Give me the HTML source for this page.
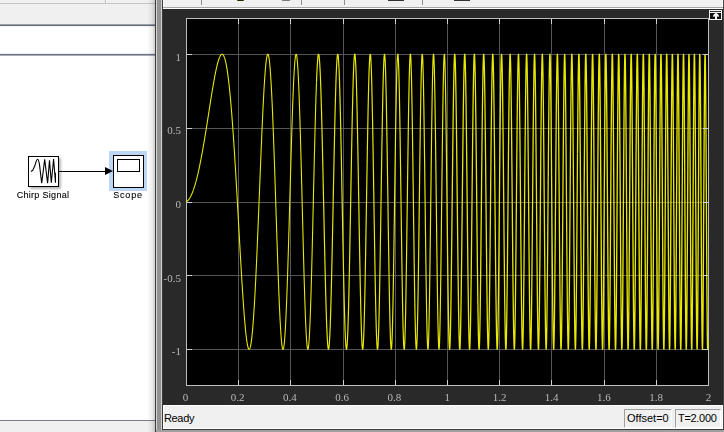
<!DOCTYPE html>
<html><head><meta charset="utf-8">
<style>
html,body{margin:0;padding:0;}
body{width:724px;height:432px;overflow:hidden;position:relative;background:#fff;font-family:"Liberation Sans",sans-serif;}
.a{position:absolute;}
.xl{position:absolute;top:389.5px;transform:translateZ(0);width:40px;text-align:center;font-family:"Liberation Serif",serif;font-size:11px;line-height:14px;color:#b8b8b8;}
.yl{position:absolute;left:140px;transform:translateZ(0);width:41px;text-align:right;font-family:"Liberation Serif",serif;font-size:11px;line-height:14px;color:#b8b8b8;}
svg .g{stroke:#555;stroke-width:1;}
svg .t{stroke:#d0d0d0;stroke-width:1;}
.st{position:absolute;font-size:11px;line-height:13px;color:#000;}
</style></head><body>
<!-- left simulink window -->
<div class="a" style="left:0;top:0;width:155px;height:3px;background:#f0f0f0"></div>
<div class="a" style="left:105px;top:0;width:1px;height:3px;background:#b8b8b8"></div>
<div class="a" style="left:106px;top:0;width:1px;height:3px;background:#fff"></div>
<div class="a" style="left:0;top:3px;width:155px;height:1px;background:#c4c4c4"></div>
<div class="a" style="left:0;top:4px;width:155px;height:20px;background:#f0f0f0"></div>
<div class="a" style="left:0;top:24px;width:155px;height:1px;background:#9aa0a8"></div>
<div class="a" style="left:0;top:25px;width:155px;height:1px;background:#6a707c"></div>
<div class="a" style="left:0;top:26px;width:155px;height:1px;background:#eef0f2"></div>
<div class="a" style="left:0;top:53px;width:155px;height:1px;background:#eceef0"></div>
<div class="a" style="left:0;top:54px;width:155px;height:1px;background:#6e7482"></div>
<div class="a" style="left:0;top:55px;width:155px;height:1px;background:#a8acb4"></div>
<div class="a" style="left:0;top:420px;width:155px;height:1px;background:#7a808a"></div>
<div class="a" style="left:0;top:421px;width:155px;height:11px;background:#f0f0f0"></div>
<div class="a" style="left:147px;top:0;width:8px;height:432px;background:linear-gradient(to right,rgba(0,0,0,0) 0%,rgba(0,0,0,0.07) 62%,rgba(0,0,0,0.19) 100%)"></div>

<!-- blocks -->
<div class="a" style="left:109px;top:151px;width:38px;height:40px;background:#bcd6f6"></div>
<div class="a" style="left:30px;top:158px;width:31px;height:31px;background:rgba(0,0,0,0.28);filter:blur(1.2px)"></div>
<div class="a" style="left:28px;top:156px;width:29px;height:29px;border:1px solid #000;background:#fff"></div>
<div class="a" style="left:113px;top:155px;width:29px;height:31px;border:1px solid #000;background:#fff"></div>
<div class="a" style="left:117px;top:159px;width:21px;height:11px;border:1px solid #000;background:#fff"></div>
<svg class="a" style="left:0;top:0" width="160" height="210">
<path d="M31,171.5 L32.8,170.2 L34.7,166.1 L36.1,161.7 C36.6,160.2 37,159.2 37.5,159.2 C38.2,159.2 38.8,160.5 39.5,164.6 L41.7,183.2 L44.7,159.4 L47.6,183.3 L49.5,160.2 L51.3,182.8 L53.6,159.1 L55.5,182.8 L55.4,172.8" fill="none" stroke="#000" stroke-width="1.1"/>
<line x1="59" y1="171.5" x2="106" y2="171.5" stroke="#000" stroke-width="1"/>
<path d="M105,167 L113,171 L105,175 Z" fill="#000"/>
</svg>
<div class="a" style="left:0px;top:190px;width:86px;text-align:center;font-size:9px;line-height:11px;letter-spacing:0.3px;color:#000;transform:translateZ(0);-webkit-text-stroke:0.1px #000">Chirp Signal</div>
<div class="a" style="left:97px;top:190px;width:62px;text-align:center;font-size:9px;line-height:11px;letter-spacing:0.8px;color:#000;transform:translateZ(0);-webkit-text-stroke:0.1px #000">Scope</div>

<!-- separator -->
<div class="a" style="left:155px;top:0;width:1px;height:432px;background:#3c3c3c"></div>
<div class="a" style="left:156px;top:0;width:1px;height:432px;background:#d4d4d4"></div>
<div class="a" style="left:157px;top:0;width:4px;height:432px;background:#939393"></div>
<div class="a" style="left:161px;top:0;width:1px;height:432px;background:#d0d0d0"></div>

<!-- scope window -->
<div class="a" style="left:162px;top:0;width:561px;height:430px;background:#292929"></div>
<div class="a" style="left:162px;top:0;width:1px;height:430px;background:#3a3a3a"></div>
<div class="a" style="left:723px;top:0;width:1px;height:432px;background:#454545"></div>
<div class="a" style="left:162px;top:429px;width:562px;height:1px;background:#3c3c3c"></div>
<div class="a" style="left:156px;top:430px;width:568px;height:2px;background:#a0a0a0"></div>
<!-- toolbar -->
<div class="a" style="left:163px;top:0;width:560px;height:7px;background:#f0f0f0"></div>
<div class="a" style="left:163px;top:0;width:1px;height:8px;background:#fff"></div>
<div class="a" style="left:722px;top:0;width:1px;height:8px;background:#fff"></div>
<div class="a" style="left:163px;top:7px;width:560px;height:1px;background:#a4a4a4"></div>
<div class="a" style="left:163px;top:8px;width:560px;height:1px;background:#fcfcfc"></div>
<div class="a" style="left:201px;top:0;width:1px;height:5px;background:#909090"></div>
<div class="a" style="left:301px;top:0;width:1px;height:5px;background:#909090"></div>
<div class="a" style="left:344px;top:0;width:1px;height:5px;background:#909090"></div>
<div class="a" style="left:422px;top:0;width:1px;height:5px;background:#909090"></div>
<div class="a" style="left:237px;top:0;width:7px;height:1px;background:#1a2a08;border-radius:0 0 3px 3px"></div>
<div class="a" style="left:282px;top:0;width:8px;height:1px;background:#7a7a7a"></div>
<div class="a" style="left:388px;top:0;width:16px;height:1px;background:#303030"></div>
<div class="a" style="left:454px;top:0;width:16px;height:1px;background:#303030"></div>

<!-- undock button -->
<div class="a" style="left:709px;top:10px;width:11px;height:8px;border:1px solid #f4f4f4;background:#111"></div>
<div class="a" style="left:711px;top:11px;width:9px;height:1px;background:#333"></div>
<div class="a" style="left:710px;top:12px;width:11px;height:1px;background:#f4f4f4"></div>
<svg class="a" style="left:700px;top:0" width="24" height="24">
<path d="M16,12.8 C17.6,13.4 19,15 19.2,16.8 L17,16.4 L17,20 L15,20 L15,16.4 L12.8,16.8 C13,15 14.4,13.4 16,12.8 Z" fill="#f4f4f4"/>
</svg>

<!-- plot -->
<svg class="a" style="left:0;top:0" width="724" height="432">
<rect x="186.5" y="18.5" width="522" height="367" fill="#000" stroke="#bdbdbd" stroke-width="1"/>
<line x1="238.5" y1="19" x2="238.5" y2="385" class="g"/>
<line x1="290.5" y1="19" x2="290.5" y2="385" class="g"/>
<line x1="343.5" y1="19" x2="343.5" y2="385" class="g"/>
<line x1="395.5" y1="19" x2="395.5" y2="385" class="g"/>
<line x1="447.5" y1="19" x2="447.5" y2="385" class="g"/>
<line x1="499.5" y1="19" x2="499.5" y2="385" class="g"/>
<line x1="551.5" y1="19" x2="551.5" y2="385" class="g"/>
<line x1="604.5" y1="19" x2="604.5" y2="385" class="g"/>
<line x1="656.5" y1="19" x2="656.5" y2="385" class="g"/>
<line x1="187" y1="54.5" x2="708" y2="54.5" class="g"/>
<line x1="187" y1="128.5" x2="708" y2="128.5" class="g"/>
<line x1="187" y1="202.5" x2="708" y2="202.5" class="g"/>
<line x1="187" y1="275.5" x2="708" y2="275.5" class="g"/>
<line x1="187" y1="349.5" x2="708" y2="349.5" class="g"/>
<path d="M186.00,201.75 186.09,201.72 186.17,201.68 186.26,201.65 186.35,201.61 186.44,201.56 186.52,201.52 186.61,201.47 186.70,201.42 186.78,201.37 186.87,201.31 186.96,201.26 187.04,201.20 187.13,201.13 187.22,201.07 187.31,201.00 187.39,200.93 187.48,200.86 187.57,200.78 187.65,200.70 187.74,200.62 187.83,200.54 187.91,200.45 188.00,200.36 188.09,200.27 188.18,200.18 188.26,200.08 188.35,199.99 188.44,199.88 188.52,199.78 188.61,199.67 188.70,199.57 188.78,199.45 188.87,199.34 188.96,199.22 189.04,199.10 189.13,198.98 189.22,198.86 189.31,198.73 189.39,198.60 189.48,198.47 189.57,198.34 189.65,198.20 189.74,198.06 189.83,197.92 189.91,197.77 190.00,197.63 190.09,197.48 190.18,197.33 190.26,197.17 190.35,197.01 190.44,196.85 190.52,196.69 190.61,196.53 190.70,196.36 190.78,196.19 190.87,196.02 190.96,195.84 191.05,195.66 191.13,195.48 191.22,195.30 191.31,195.12 191.39,194.93 191.48,194.74 191.57,194.55 191.66,194.35 191.74,194.15 191.83,193.95 191.92,193.75 192.00,193.54 192.09,193.33 192.18,193.12 192.26,192.91 192.35,192.70 192.44,192.48 192.53,192.26 192.61,192.03 192.70,191.81 192.79,191.58 192.87,191.35 192.96,191.11 193.05,190.88 193.13,190.64 193.22,190.40 193.31,190.16 193.40,189.91 193.48,189.66 193.57,189.41 193.66,189.16 193.74,188.90 193.83,188.64 193.92,188.38 194.00,188.12 194.09,187.85 194.18,187.58 194.26,187.31 194.35,187.04 194.44,186.76 194.53,186.49 194.61,186.20 194.70,185.92 194.79,185.64 194.87,185.35 194.96,185.06 195.05,184.76 195.13,184.47 195.22,184.17 195.31,183.87 195.40,183.56 195.48,183.26 195.57,182.95 195.66,182.64 195.74,182.33 195.83,182.01 195.92,181.69 196.00,181.37 196.09,181.05 196.18,180.73 196.27,180.40 196.35,180.07 196.44,179.74 196.53,179.40 196.61,179.06 196.70,178.72 196.79,178.38 196.88,178.04 196.96,177.69 197.05,177.34 197.14,176.99 197.22,176.64 197.31,176.28 197.40,175.92 197.48,175.56 197.57,175.20 197.66,174.83 197.75,174.46 197.83,174.09 197.92,173.72 198.01,173.35 198.09,172.97 198.18,172.59 198.27,172.21 198.35,171.82 198.44,171.44 198.53,171.05 198.62,170.66 198.70,170.26 198.79,169.87 198.88,169.47 198.96,169.07 199.05,168.67 199.14,168.26 199.22,167.86 199.31,167.45 199.40,167.04 199.49,166.62 199.57,166.21 199.66,165.79 199.75,165.37 199.83,164.95 199.92,164.52 200.01,164.10 200.09,163.67 200.18,163.24 200.27,162.80 200.35,162.37 200.44,161.93 200.53,161.49 200.62,161.05 200.70,160.61 200.79,160.16 200.88,159.72 200.96,159.27 201.05,158.82 201.14,158.36 201.22,157.91 201.31,157.45 201.40,156.99 201.49,156.53 201.57,156.07 201.66,155.60 201.75,155.14 201.83,154.67 201.92,154.20 202.01,153.72 202.09,153.25 202.18,152.77 202.27,152.29 202.36,151.81 202.44,151.33 202.53,150.85 202.62,150.36 202.70,149.88 202.79,149.39 202.88,148.90 202.97,148.40 203.05,147.91 203.14,147.41 203.23,146.92 203.31,146.42 203.40,145.92 203.49,145.42 203.57,144.91 203.66,144.41 203.75,143.90 203.84,143.39 203.92,142.88 204.01,142.37 204.10,141.86 204.18,141.34 204.27,140.83 204.36,140.31 204.44,139.79 204.53,139.27 204.62,138.75 204.71,138.23 204.79,137.70 204.88,137.18 204.97,136.65 205.05,136.12 205.14,135.59 205.23,135.06 205.31,134.53 205.40,134.00 205.49,133.46 205.57,132.93 205.66,132.39 205.75,131.86 205.84,131.32 205.92,130.78 206.01,130.24 206.10,129.70 206.18,129.15 206.27,128.61 206.36,128.07 206.44,127.52 206.53,126.98 206.62,126.43 206.71,125.88 206.79,125.33 206.88,124.79 206.97,124.24 207.05,123.69 207.14,123.13 207.23,122.58 207.31,122.03 207.40,121.48 207.49,120.92 207.58,120.37 207.66,119.82 207.75,119.26 207.84,118.71 207.92,118.15 208.01,117.60 208.10,117.04 208.19,116.48 208.27,115.93 208.36,115.37 208.45,114.81 208.53,114.25 208.62,113.70 208.71,113.14 208.79,112.58 208.88,112.02 208.97,111.47 209.06,110.91 209.14,110.35 209.23,109.79 209.32,109.24 209.40,108.68 209.49,108.12 209.58,107.57 209.66,107.01 209.75,106.45 209.84,105.90 209.93,105.34 210.01,104.79 210.10,104.23 210.19,103.68 210.27,103.13 210.36,102.57 210.45,102.02 210.53,101.47 210.62,100.92 210.71,100.37 210.80,99.82 210.88,99.27 210.97,98.73 211.06,98.18 211.14,97.64 211.23,97.09 211.32,96.55 211.40,96.01 211.49,95.47 211.58,94.93 211.66,94.39 211.75,93.85 211.84,93.31 211.93,92.78 212.01,92.25 212.10,91.72 212.19,91.19 212.27,90.66 212.36,90.13 212.45,89.60 212.53,89.08 212.62,88.56 212.71,88.04 212.80,87.52 212.88,87.00 212.97,86.49 213.06,85.98 213.14,85.47 213.23,84.96 213.32,84.45 213.41,83.95 213.49,83.45 213.58,82.95 213.67,82.45 213.75,81.96 213.84,81.47 213.93,80.98 214.01,80.49 214.10,80.00 214.19,79.52 214.28,79.04 214.36,78.57 214.45,78.09 214.54,77.62 214.62,77.15 214.71,76.69 214.80,76.23 214.88,75.77 214.97,75.31 215.06,74.86 215.15,74.41 215.23,73.97 215.32,73.52 215.41,73.09 215.49,72.65 215.58,72.22 215.67,71.79 215.75,71.37 215.84,70.94 215.93,70.53 216.01,70.11 216.10,69.70 216.19,69.30 216.28,68.90 216.36,68.50 216.45,68.11 216.54,67.72 216.62,67.33 216.71,66.95 216.80,66.57 216.88,66.20 216.97,65.84 217.06,65.47 217.15,65.11 217.23,64.76 217.32,64.41 217.41,64.07 217.49,63.73 217.58,63.39 217.67,63.06 217.75,62.74 217.84,62.42 217.93,62.11 218.02,61.80 218.10,61.49 218.19,61.19 218.28,60.90 218.36,60.61 218.45,60.33 218.54,60.05 218.62,59.78 218.71,59.52 218.80,59.26 218.89,59.00 218.97,58.76 219.06,58.51 219.15,58.28 219.23,58.05 219.32,57.82 219.41,57.61 219.50,57.39 219.58,57.19 219.67,56.99 219.76,56.80 219.84,56.61 219.93,56.43 220.02,56.26 220.10,56.09 220.19,55.94 220.28,55.78 220.37,55.64 220.45,55.50 220.54,55.37 220.63,55.24 220.71,55.12 220.80,55.01 220.89,54.91 220.97,54.81 221.06,54.73 221.15,54.64 221.24,54.57 221.32,54.50 221.41,54.44 221.50,54.39 221.58,54.35 221.67,54.31 221.76,54.29 221.84,54.27 221.93,54.25 222.02,54.25 222.11,54.25 222.19,54.27 222.28,54.29 222.37,54.31 222.45,54.35 222.54,54.40 222.63,54.45 222.71,54.51 222.80,54.58 222.89,54.66 222.97,54.75 223.06,54.84 223.15,54.95 223.24,55.06 223.32,55.18 223.41,55.31 223.50,55.45 223.58,55.60 223.67,55.76 223.76,55.92 223.84,56.10 223.93,56.29 224.02,56.48 224.11,56.68 224.19,56.90 224.28,57.12 224.37,57.35 224.45,57.59 224.54,57.84 224.63,58.10 224.72,58.37 224.80,58.65 224.89,58.94 224.98,59.23 225.06,59.54 225.15,59.86 225.24,60.19 225.32,60.52 225.41,60.87 225.50,61.23 225.59,61.59 225.67,61.97 225.76,62.36 225.85,62.75 225.93,63.16 226.02,63.58 226.11,64.00 226.19,64.44 226.28,64.89 226.37,65.35 226.45,65.81 226.54,66.29 226.63,66.78 226.72,67.28 226.80,67.79 226.89,68.31 226.98,68.84 227.06,69.38 227.15,69.93 227.24,70.49 227.32,71.06 227.41,71.64 227.50,72.24 227.59,72.84 227.67,73.45 227.76,74.08 227.85,74.71 227.93,75.36 228.02,76.01 228.11,76.68 228.19,77.36 228.28,78.04 228.37,78.74 228.46,79.45 228.54,80.17 228.63,80.90 228.72,81.64 228.80,82.39 228.89,83.15 228.98,83.93 229.06,84.71 229.15,85.50 229.24,86.31 229.33,87.12 229.41,87.95 229.50,88.78 229.59,89.63 229.67,90.48 229.76,91.35 229.85,92.23 229.94,93.12 230.02,94.02 230.11,94.92 230.20,95.84 230.28,96.77 230.37,97.71 230.46,98.66 230.54,99.62 230.63,100.60 230.72,101.58 230.81,102.57 230.89,103.57 230.98,104.58 231.07,105.60 231.15,106.63 231.24,107.68 231.33,108.73 231.41,109.79 231.50,110.86 231.59,111.94 231.68,113.03 231.76,114.13 231.85,115.24 231.94,116.36 232.02,117.49 232.11,118.63 232.20,119.78 232.28,120.94 232.37,122.11 232.46,123.28 232.55,124.47 232.63,125.66 232.72,126.87 232.81,128.08 232.89,129.30 232.98,130.53 233.07,131.77 233.15,133.02 233.24,134.28 233.33,135.54 233.41,136.81 233.50,138.10 233.59,139.39 233.68,140.68 233.76,141.99 233.85,143.30 233.94,144.63 234.02,145.96 234.11,147.29 234.20,148.64 234.28,149.99 234.37,151.35 234.46,152.72 234.55,154.09 234.63,155.47 234.72,156.86 234.81,158.26 234.89,159.66 234.98,161.07 235.07,162.48 235.16,163.90 235.24,165.33 235.33,166.77 235.42,168.21 235.50,169.65 235.59,171.10 235.68,172.56 235.76,174.02 235.85,175.49 235.94,176.96 236.03,178.44 236.11,179.92 236.20,181.41 236.29,182.91 236.37,184.40 236.46,185.90 236.55,187.41 236.63,188.92 236.72,190.43 236.81,191.95 236.90,193.47 236.98,194.99 237.07,196.52 237.16,198.05 237.24,199.59 237.33,201.12 237.42,202.66 237.50,204.20 237.59,205.75 237.68,207.29 237.76,208.84 237.85,210.39 237.94,211.94 238.03,213.49 238.11,215.05 238.20,216.60 238.29,218.16 238.37,219.72 238.46,221.27 238.55,222.83 238.63,224.39 238.72,225.94 238.81,227.50 238.90,229.06 238.98,230.61 239.07,232.17 239.16,233.72 239.24,235.28 239.33,236.83 239.42,238.38 239.50,239.93 239.59,241.47 239.68,243.02 239.77,244.56 239.85,246.10 239.94,247.63 240.03,249.16 240.11,250.69 240.20,252.22 240.29,253.74 240.38,255.26 240.46,256.77 240.55,258.28 240.64,259.79 240.72,261.29 240.81,262.79 240.90,264.28 240.98,265.76 241.07,267.24 241.16,268.71 241.25,270.18 241.33,271.64 241.42,273.10 241.51,274.54 241.59,275.98 241.68,277.42 241.77,278.84 241.85,280.26 241.94,281.67 242.03,283.07 242.12,284.47 242.20,285.85 242.29,287.23 242.38,288.60 242.46,289.95 242.55,291.30 242.64,292.64 242.72,293.97 242.81,295.29 242.90,296.60 242.99,297.89 243.07,299.18 243.16,300.46 243.25,301.72 243.33,302.97 243.42,304.21 243.51,305.44 243.59,306.66 243.68,307.86 243.77,309.05 243.86,310.23 243.94,311.40 244.03,312.55 244.12,313.69 244.20,314.81 244.29,315.92 244.38,317.02 244.46,318.10 244.55,319.17 244.64,320.22 244.72,321.25 244.81,322.27 244.90,323.28 244.99,324.27 245.07,325.24 245.16,326.20 245.25,327.14 245.33,328.06 245.42,328.97 245.51,329.86 245.59,330.73 245.68,331.59 245.77,332.42 245.86,333.24 245.94,334.04 246.03,334.83 246.12,335.59 246.20,336.34 246.29,337.06 246.38,337.77 246.47,338.46 246.55,339.13 246.64,339.77 246.73,340.40 246.81,341.01 246.90,341.60 246.99,342.17 247.07,342.72 247.16,343.24 247.25,343.75 247.33,344.23 247.42,344.69 247.51,345.14 247.60,345.56 247.68,345.95 247.77,346.33 247.86,346.68 247.94,347.02 248.03,347.33 248.12,347.61 248.21,347.88 248.29,348.12 248.38,348.34 248.47,348.53 248.55,348.70 248.64,348.85 248.73,348.98 248.81,349.08 248.90,349.16 248.99,349.21 249.07,349.24 249.16,349.25 249.25,349.23 249.34,349.19 249.42,349.12 249.51,349.03 249.60,348.92 249.68,348.78 249.77,348.61 249.86,348.43 249.94,348.21 250.03,347.97 250.12,347.71 250.21,347.42 250.29,347.11 250.38,346.77 250.47,346.41 250.55,346.02 250.64,345.61 250.73,345.17 250.81,344.70 250.90,344.21 250.99,343.70 251.08,343.16 251.16,342.60 251.25,342.01 251.34,341.39 251.42,340.75 251.51,340.09 251.60,339.40 251.69,338.68 251.77,337.94 251.86,337.17 251.95,336.38 252.03,335.57 252.12,334.72 252.21,333.86 252.29,332.97 252.38,332.05 252.47,331.11 252.56,330.15 252.64,329.16 252.73,328.15 252.82,327.11 252.90,326.05 252.99,324.96 253.08,323.85 253.16,322.72 253.25,321.56 253.34,320.38 253.43,319.17 253.51,317.94 253.60,316.69 253.69,315.42 253.77,314.12 253.86,312.80 253.95,311.46 254.03,310.09 254.12,308.70 254.21,307.30 254.30,305.86 254.38,304.41 254.47,302.94 254.56,301.44 254.64,299.93 254.73,298.39 254.82,296.83 254.90,295.25 254.99,293.65 255.08,292.03 255.17,290.40 255.25,288.74 255.34,287.06 255.43,285.37 255.51,283.65 255.60,281.92 255.69,280.17 255.77,278.41 255.86,276.62 255.95,274.82 256.03,273.00 256.12,271.16 256.21,269.31 256.30,267.44 256.38,265.56 256.47,263.66 256.56,261.75 256.64,259.82 256.73,257.88 256.82,255.93 256.90,253.96 256.99,251.97 257.08,249.98 257.17,247.97 257.25,245.95 257.34,243.92 257.43,241.88 257.51,239.83 257.60,237.76 257.69,235.69 257.77,233.61 257.86,231.52 257.95,229.41 258.04,227.31 258.12,225.19 258.21,223.06 258.30,220.93 258.38,218.79 258.47,216.65 258.56,214.50 258.64,212.34 258.73,210.18 258.82,208.02 258.91,205.85 258.99,203.68 259.08,201.50 259.17,199.33 259.25,197.15 259.34,194.97 259.43,192.78 259.51,190.60 259.60,188.42 259.69,186.24 259.78,184.05 259.86,181.87 259.95,179.70 260.04,177.52 260.12,175.35 260.21,173.18 260.30,171.01 260.38,168.85 260.47,166.69 260.56,164.54 260.65,162.40 260.73,160.26 260.82,158.13 260.91,156.01 260.99,153.89 261.08,151.78 261.17,149.68 261.25,147.60 261.34,145.52 261.43,143.45 261.52,141.39 261.60,139.35 261.69,137.31 261.78,135.29 261.86,133.29 261.95,131.29 262.04,129.32 262.12,127.35 262.21,125.40 262.30,123.47 262.39,121.55 262.47,119.65 262.56,117.77 262.65,115.91 262.73,114.06 262.82,112.24 262.91,110.43 263.00,108.64 263.08,106.87 263.17,105.13 263.26,103.40 263.34,101.70 263.43,100.02 263.52,98.37 263.60,96.73 263.69,95.12 263.78,93.54 263.87,91.98 263.95,90.44 264.04,88.93 264.13,87.45 264.21,86.00 264.30,84.57 264.39,83.17 264.47,81.79 264.56,80.45 264.65,79.13 264.74,77.85 264.82,76.59 264.91,75.37 265.00,74.17 265.08,73.01 265.17,71.88 265.26,70.78 265.34,69.71 265.43,68.67 265.52,67.67 265.61,66.70 265.69,65.77 265.78,64.86 265.87,64.00 265.95,63.17 266.04,62.37 266.13,61.61 266.21,60.88 266.30,60.19 266.39,59.54 266.48,58.92 266.56,58.35 266.65,57.80 266.74,57.30 266.82,56.83 266.91,56.40 267.00,56.01 267.08,55.66 267.17,55.35 267.26,55.07 267.35,54.84 267.43,54.64 267.52,54.49 267.61,54.37 267.69,54.29 267.78,54.25 267.87,54.26 267.95,54.30 268.04,54.38 268.13,54.51 268.22,54.67 268.30,54.88 268.39,55.12 268.48,55.41 268.56,55.73 268.65,56.10 268.74,56.51 268.82,56.96 268.91,57.45 269.00,57.98 269.09,58.55 269.17,59.17 269.26,59.82 269.35,60.51 269.43,61.25 269.52,62.02 269.61,62.84 269.69,63.69 269.78,64.59 269.87,65.53 269.95,66.50 270.04,67.52 270.13,68.57 270.22,69.67 270.30,70.80 270.39,71.97 270.48,73.19 270.56,74.44 270.65,75.72 270.74,77.05 270.82,78.41 270.91,79.82 271.00,81.25 271.09,82.73 271.17,84.24 271.26,85.79 271.35,87.37 271.43,88.99 271.52,90.65 271.61,92.34 271.69,94.06 271.78,95.82 271.87,97.61 271.96,99.43 272.04,101.29 272.13,103.17 272.22,105.09 272.30,107.04 272.39,109.02 272.48,111.04 272.56,113.08 272.65,115.15 272.74,117.25 272.83,119.37 272.91,121.52 273.00,123.71 273.09,125.91 273.17,128.14 273.26,130.40 273.35,132.68 273.44,134.99 273.52,137.31 273.61,139.66 273.70,142.04 273.78,144.43 273.87,146.84 273.96,149.27 274.04,151.73 274.13,154.19 274.22,156.68 274.31,159.19 274.39,161.70 274.48,164.24 274.57,166.79 274.65,169.35 274.74,171.93 274.83,174.51 274.91,177.11 275.00,179.72 275.09,182.34 275.18,184.97 275.26,187.60 275.35,190.25 275.44,192.89 275.52,195.55 275.61,198.21 275.70,200.87 275.78,203.54 275.87,206.20 275.96,208.87 276.04,211.54 276.13,214.21 276.22,216.87 276.31,219.54 276.39,222.20 276.48,224.85 276.57,227.51 276.65,230.15 276.74,232.79 276.83,235.42 276.91,238.04 277.00,240.65 277.09,243.25 277.18,245.84 277.26,248.42 277.35,250.99 277.44,253.54 277.52,256.07 277.61,258.59 277.70,261.09 277.79,263.57 277.87,266.04 277.96,268.48 278.05,270.91 278.13,273.31 278.22,275.69 278.31,278.05 278.39,280.38 278.48,282.69 278.57,284.97 278.65,287.23 278.74,289.46 278.83,291.66 278.92,293.83 279.00,295.97 279.09,298.08 279.18,300.15 279.26,302.20 279.35,304.21 279.44,306.18 279.52,308.13 279.61,310.03 279.70,311.90 279.79,313.73 279.87,315.52 279.96,317.28 280.05,318.99 280.13,320.66 280.22,322.30 280.31,323.89 280.39,325.44 280.48,326.94 280.57,328.40 280.66,329.82 280.74,331.19 280.83,332.51 280.92,333.79 281.00,335.03 281.09,336.21 281.18,337.35 281.26,338.43 281.35,339.47 281.44,340.46 281.53,341.40 281.61,342.29 281.70,343.12 281.79,343.91 281.87,344.64 281.96,345.32 282.05,345.94 282.13,346.52 282.22,347.04 282.31,347.50 282.40,347.91 282.48,348.27 282.57,348.57 282.66,348.82 282.74,349.01 282.83,349.15 282.92,349.23 283.00,349.25 283.09,349.22 283.18,349.13 283.27,348.98 283.35,348.78 283.44,348.52 283.53,348.21 283.61,347.84 283.70,347.41 283.79,346.92 283.88,346.38 283.96,345.78 284.05,345.13 284.14,344.42 284.22,343.65 284.31,342.83 284.40,341.95 284.48,341.01 284.57,340.02 284.66,338.98 284.75,337.87 284.83,336.72 284.92,335.51 285.01,334.25 285.09,332.93 285.18,331.56 285.27,330.13 285.35,328.66 285.44,327.13 285.53,325.55 285.62,323.92 285.70,322.24 285.79,320.51 285.88,318.73 285.96,316.90 286.05,315.02 286.14,313.09 286.22,311.12 286.31,309.11 286.40,307.04 286.49,304.93 286.57,302.78 286.66,300.59 286.75,298.35 286.83,296.07 286.92,293.75 287.01,291.39 287.09,288.99 287.18,286.56 287.27,284.08 287.36,281.57 287.44,279.03 287.53,276.45 287.62,273.83 287.70,271.19 287.79,268.51 287.88,265.80 287.96,263.07 288.05,260.30 288.14,257.51 288.23,254.69 288.31,251.85 288.40,248.99 288.49,246.10 288.57,243.19 288.66,240.26 288.75,237.31 288.83,234.35 288.92,231.36 289.01,228.37 289.10,225.35 289.18,222.33 289.27,219.29 289.36,216.25 289.44,213.19 289.53,210.13 289.62,207.06 289.70,203.99 289.79,200.91 289.88,197.84 289.96,194.76 290.05,191.68 290.14,188.60 290.23,185.53 290.31,182.46 290.40,179.39 290.49,176.34 290.57,173.29 290.66,170.25 290.75,167.23 290.84,164.21 290.92,161.21 291.01,158.23 291.10,155.27 291.18,152.32 291.27,149.39 291.36,146.48 291.44,143.60 291.53,140.74 291.62,137.90 291.71,135.09 291.79,132.31 291.88,129.56 291.97,126.83 292.05,124.14 292.14,121.49 292.23,118.86 292.31,116.28 292.40,113.73 292.49,111.22 292.57,108.74 292.66,106.31 292.75,103.92 292.84,101.57 292.92,99.27 293.01,97.02 293.10,94.81 293.18,92.64 293.27,90.53 293.36,88.47 293.44,86.45 293.53,84.49 293.62,82.59 293.71,80.73 293.79,78.94 293.88,77.19 293.97,75.51 294.05,73.88 294.14,72.32 294.23,70.81 294.31,69.36 294.40,67.98 294.49,66.66 294.58,65.40 294.66,64.20 294.75,63.07 294.84,62.01 294.92,61.01 295.01,60.07 295.10,59.21 295.19,58.41 295.27,57.68 295.36,57.02 295.45,56.43 295.53,55.91 295.62,55.46 295.71,55.08 295.79,54.77 295.88,54.53 295.97,54.37 296.06,54.27 296.14,54.25 296.23,54.30 296.32,54.42 296.40,54.62 296.49,54.89 296.58,55.23 296.66,55.64 296.75,56.13 296.84,56.68 296.93,57.31 297.01,58.02 297.10,58.79 297.19,59.64 297.27,60.56 297.36,61.54 297.45,62.61 297.53,63.74 297.62,64.94 297.71,66.21 297.80,67.55 297.88,68.96 297.97,70.44 298.06,71.98 298.14,73.59 298.23,75.27 298.32,77.01 298.40,78.82 298.49,80.69 298.58,82.63 298.66,84.63 298.75,86.69 298.84,88.81 298.93,90.99 299.01,93.23 299.10,95.52 299.19,97.88 299.27,100.29 299.36,102.75 299.45,105.27 299.53,107.83 299.62,110.45 299.71,113.12 299.80,115.84 299.88,118.60 299.97,121.41 300.06,124.27 300.14,127.16 300.23,130.10 300.32,133.08 300.40,136.10 300.49,139.15 300.58,142.24 300.67,145.36 300.75,148.52 300.84,151.70 300.93,154.92 301.01,158.16 301.10,161.43 301.19,164.72 301.27,168.03 301.36,171.37 301.45,174.72 301.54,178.09 301.62,181.47 301.71,184.87 301.80,188.28 301.88,191.71 301.97,195.13 302.06,198.57 302.14,202.01 302.23,205.45 302.32,208.89 302.41,212.33 302.49,215.77 302.58,219.20 302.67,222.63 302.75,226.04 302.84,229.45 302.93,232.84 303.01,236.22 303.10,239.58 303.19,242.92 303.28,246.25 303.36,249.55 303.45,252.82 303.54,256.07 303.62,259.30 303.71,262.49 303.80,265.65 303.88,268.78 303.97,271.87 304.06,274.92 304.15,277.94 304.23,280.92 304.32,283.85 304.41,286.74 304.49,289.58 304.58,292.38 304.67,295.12 304.75,297.82 304.84,300.46 304.93,303.05 305.02,305.58 305.10,308.06 305.19,310.47 305.28,312.83 305.36,315.12 305.45,317.35 305.54,319.51 305.62,321.61 305.71,323.64 305.80,325.60 305.89,327.49 305.97,329.31 306.06,331.06 306.15,332.73 306.23,334.33 306.32,335.86 306.41,337.30 306.50,338.67 306.58,339.95 306.67,341.16 306.76,342.29 306.84,343.33 306.93,344.29 307.02,345.17 307.10,345.97 307.19,346.68 307.28,347.30 307.37,347.84 307.45,348.29 307.54,348.66 307.63,348.94 307.71,349.13 307.80,349.23 307.89,349.25 307.97,349.17 308.06,349.01 308.15,348.76 308.24,348.42 308.32,347.99 308.41,347.48 308.50,346.87 308.58,346.18 308.67,345.40 308.76,344.53 308.84,343.57 308.93,342.53 309.02,341.40 309.11,340.18 309.19,338.88 309.28,337.50 309.37,336.03 309.45,334.48 309.54,332.84 309.63,331.12 309.71,329.32 309.80,327.45 309.89,325.49 309.98,323.45 310.06,321.34 310.15,319.15 310.24,316.89 310.32,314.56 310.41,312.15 310.50,309.67 310.58,307.13 310.67,304.51 310.76,301.83 310.85,299.09 310.93,296.28 311.02,293.41 311.11,290.48 311.19,287.49 311.28,284.45 311.37,281.35 311.45,278.20 311.54,275.00 311.63,271.75 311.72,268.45 311.80,265.11 311.89,261.73 311.98,258.30 312.06,254.84 312.15,251.34 312.24,247.81 312.32,244.24 312.41,240.65 312.50,237.02 312.58,233.38 312.67,229.70 312.76,226.01 312.85,222.30 312.93,218.58 313.02,214.84 313.11,211.09 313.19,207.33 313.28,203.57 313.37,199.80 313.45,196.03 313.54,192.26 313.63,188.49 313.72,184.73 313.80,180.98 313.89,177.24 313.98,173.52 314.06,169.81 314.15,166.12 314.24,162.45 314.32,158.80 314.41,155.18 314.50,151.59 314.59,148.03 314.67,144.50 314.76,141.01 314.85,137.56 314.93,134.15 315.02,130.78 315.11,127.45 315.19,124.18 315.28,120.95 315.37,117.77 315.46,114.65 315.54,111.59 315.63,108.59 315.72,105.64 315.80,102.76 315.89,99.95 315.98,97.20 316.06,94.52 316.15,91.91 316.24,89.38 316.33,86.92 316.41,84.54 316.50,82.24" fill="none" stroke="#e8e800" stroke-width="1.10" stroke-linejoin="round"/>
<path d="M316.50,82.24 316.59,80.01 316.67,77.87 316.76,75.82 316.85,73.84 316.94,71.96 317.02,70.16 317.11,68.46 317.20,66.84 317.28,65.32 317.37,63.89 317.46,62.55 317.54,61.31 317.63,60.17 317.72,59.13 317.81,58.18 317.89,57.34 317.98,56.60 318.07,55.95 318.15,55.41 318.24,54.97 318.33,54.64 318.41,54.41 318.50,54.28 318.59,54.25 318.67,54.33 318.76,54.52 318.85,54.81 318.94,55.20 319.02,55.70 319.11,56.30 319.20,57.01 319.28,57.82 319.37,58.74 319.46,59.75 319.55,60.87 319.63,62.09 319.72,63.42 319.81,64.84 319.89,66.36 319.98,67.98 320.07,69.70 320.15,71.52 320.24,73.43 320.33,75.44 320.41,77.53 320.50,79.73 320.59,82.01 320.68,84.37 320.76,86.83 320.85,89.37 320.94,92.00 321.02,94.71 321.11,97.50 321.20,100.36 321.28,103.30 321.37,106.32 321.46,109.41 321.55,112.57 321.63,115.80 321.72,119.09 321.81,122.45 321.89,125.87 321.98,129.34 322.07,132.88 322.15,136.46 322.24,140.10 322.33,143.78 322.42,147.52 322.50,151.29 322.59,155.10 322.68,158.95 322.76,162.84 322.85,166.76 322.94,170.71 323.02,174.68 323.11,178.67 323.20,182.69 323.29,186.72 323.37,190.77 323.46,194.83 323.55,198.89 323.63,202.96 323.72,207.03 323.81,211.10 323.89,215.17 323.98,219.23 324.07,223.27 324.16,227.31 324.24,231.32 324.33,235.32 324.42,239.29 324.50,243.24 324.59,247.15 324.68,251.04 324.76,254.88 324.85,258.69 324.94,262.46 325.03,266.18 325.11,269.86 325.20,273.48 325.29,277.05 325.37,280.57 325.46,284.02 325.55,287.41 325.63,290.74 325.72,294.00 325.81,297.19 325.90,300.30 325.98,303.34 326.07,306.31 326.16,309.19 326.24,311.99 326.33,314.70 326.42,317.32 326.50,319.86 326.59,322.30 326.68,324.65 326.77,326.90 326.85,329.06 326.94,331.11 327.03,333.06 327.11,334.91 327.20,336.65 327.29,338.29 327.38,339.81 327.46,341.23 327.55,342.53 327.64,343.73 327.72,344.80 327.81,345.77 327.90,346.62 327.98,347.35 328.07,347.96 328.16,348.46 328.25,348.83 328.33,349.09 328.42,349.23 328.51,349.24 328.59,349.14 328.68,348.91 328.77,348.57 328.85,348.10 328.94,347.52 329.03,346.81 329.12,345.99 329.20,345.04 329.29,343.98 329.38,342.80 329.46,341.50 329.55,340.08 329.64,338.55 329.72,336.91 329.81,335.15 329.90,333.28 329.99,331.30 330.07,329.21 330.16,327.01 330.25,324.70 330.33,322.30 330.42,319.79 330.51,317.17 330.59,314.47 330.68,311.66 330.77,308.76 330.86,305.77 330.94,302.69 331.03,299.52 331.12,296.27 331.20,292.93 331.29,289.52 331.38,286.03 331.46,282.46 331.55,278.83 331.64,275.12 331.73,271.36 331.81,267.53 331.90,263.64 331.99,259.70 332.07,255.70 332.16,251.66 332.25,247.57 332.33,243.44 332.42,239.27 332.51,235.07 332.60,230.83 332.68,226.57 332.77,222.28 332.86,217.97 332.94,213.65 333.03,209.31 333.12,204.97 333.20,200.62 333.29,196.27 333.38,191.92 333.46,187.57 333.55,183.24 333.64,178.92 333.73,174.61 333.81,170.33 333.90,166.08 333.99,161.85 334.07,157.65 334.16,153.49 334.25,149.37 334.34,145.30 334.42,141.27 334.51,137.30 334.60,133.38 334.68,129.51 334.77,125.71 334.86,121.98 334.94,118.31 335.03,114.71 335.12,111.20 335.20,107.76 335.29,104.40 335.38,101.13 335.47,97.94 335.55,94.85 335.64,91.85 335.73,88.95 335.81,86.15 335.90,83.45 335.99,80.85 336.07,78.37 336.16,75.99 336.25,73.73 336.34,71.58 336.42,69.55 336.51,67.64 336.60,65.85 336.68,64.18 336.77,62.63 336.86,61.22 336.95,59.93 337.03,58.76 337.12,57.73 337.21,56.83 337.29,56.07 337.38,55.43 337.47,54.94 337.55,54.57 337.64,54.34 337.73,54.25 337.81,54.30 337.90,54.48 337.99,54.79 338.08,55.25 338.16,55.84 338.25,56.57 338.34,57.43 338.42,58.42 338.51,59.56 338.60,60.82 338.69,62.22 338.77,63.75 338.86,65.41 338.95,67.19 339.03,69.11 339.12,71.15 339.21,73.32 339.29,75.60 339.38,78.01 339.47,80.54 339.56,83.18 339.64,85.94 339.73,88.81 339.82,91.78 339.90,94.86 339.99,98.05 340.08,101.34 340.16,104.72 340.25,108.20 340.34,111.77 340.43,115.43 340.51,119.17 340.60,123.00 340.69,126.90 340.77,130.87 340.86,134.92 340.95,139.03 341.03,143.21 341.12,147.44 341.21,151.73 341.29,156.07 341.38,160.46 341.47,164.89 341.56,169.36 341.64,173.86 341.73,178.39 341.82,182.95 341.90,187.52 341.99,192.12 342.08,196.72 342.17,201.34 342.25,205.95 342.34,210.57 342.43,215.17 342.51,219.77 342.60,224.35 342.69,228.92 342.77,233.46 342.86,237.97 342.95,242.44 343.03,246.88 343.12,251.28 343.21,255.63 343.30,259.93 343.38,264.17 343.47,268.35 343.56,272.47 343.64,276.52 343.73,280.50 343.82,284.41 343.90,288.23 343.99,291.96 344.08,295.61 344.17,299.17 344.25,302.63 344.34,305.99 344.43,309.25 344.51,312.40 344.60,315.45 344.69,318.37 344.77,321.19 344.86,323.88 344.95,326.45 345.04,328.90 345.12,331.21 345.21,333.40 345.30,335.46 345.38,337.38 345.47,339.16 345.56,340.80 345.64,342.30 345.73,343.66 345.82,344.88 345.91,345.94 345.99,346.87 346.08,347.64 346.17,348.26 346.25,348.73 346.34,349.05 346.43,349.22 346.51,349.24 346.60,349.10 346.69,348.81 346.78,348.37 346.86,347.78 346.95,347.03 347.04,346.14 347.12,345.09 347.21,343.89 347.30,342.54 347.38,341.05 347.47,339.41 347.56,337.62 347.65,335.69 347.73,333.62 347.82,331.41 347.91,329.07 347.99,326.58 348.08,323.97 348.17,321.22 348.25,318.35 348.34,315.35 348.43,312.23 348.52,308.99 348.60,305.64 348.69,302.17 348.78,298.60 348.86,294.92 348.95,291.14 349.04,287.26 349.12,283.29 349.21,279.23 349.30,275.08 349.39,270.86 349.47,266.56 349.56,262.18 349.65,257.74 349.73,253.24 349.82,248.68 349.91,244.06 350.00,239.40 350.08,234.69 350.17,229.95 350.26,225.17 350.34,220.37 350.43,215.54 350.52,210.70 350.60,205.84 350.69,200.98 350.78,196.11 350.87,191.25 350.95,186.40 351.04,181.56 351.13,176.74 351.21,171.94 351.30,167.18 351.39,162.45 351.47,157.76 351.56,153.12 351.65,148.53 351.74,143.99 351.82,139.52 351.91,135.11 352.00,130.77 352.08,126.51 352.17,122.34 352.26,118.24 352.34,114.24 352.43,110.33 352.52,106.52 352.61,102.82 352.69,99.22 352.78,95.74 352.87,92.37 352.95,89.13 353.04,86.01 353.13,83.01 353.21,80.15 353.30,77.42 353.39,74.83 353.48,72.38 353.56,70.08 353.65,67.92 353.74,65.91 353.82,64.06 353.91,62.36 354.00,60.82 354.08,59.43 354.17,58.21 354.26,57.15 354.35,56.25 354.43,55.52 354.52,54.95 354.61,54.55 354.69,54.32 354.78,54.25 354.87,54.36 354.95,54.63 355.04,55.07 355.13,55.68 355.22,56.46 355.30,57.40 355.39,58.51 355.48,59.79 355.56,61.23 355.65,62.84 355.74,64.60 355.82,66.53 355.91,68.61 356.00,70.84 356.08,73.23 356.17,75.78 356.26,78.46 356.35,81.30 356.43,84.27 356.52,87.38 356.61,90.63 356.69,94.01 356.78,97.52 356.87,101.15 356.96,104.90 357.04,108.76 357.13,112.74 357.22,116.82 357.30,121.01 357.39,125.29 357.48,129.66 357.56,134.13 357.65,138.67 357.74,143.29 357.82,147.98 357.91,152.74 358.00,157.56 358.09,162.43 358.17,167.35 358.26,172.32 358.35,177.32 358.43,182.36 358.52,187.42 358.61,192.50 358.69,197.59 358.78,202.69 358.87,207.80 358.96,212.89 359.04,217.98 359.13,223.05 359.22,228.10 359.30,233.12 359.39,238.10 359.48,243.04 359.56,247.94 359.65,252.78 359.74,257.56 359.83,262.27 359.91,266.92 360.00,271.49 360.09,275.97 360.17,280.37 360.26,284.68 360.35,288.88 360.44,292.99 360.52,296.98 360.61,300.86 360.70,304.62 360.78,308.25 360.87,311.76 360.96,315.13 361.04,318.36 361.13,321.46 361.22,324.41 361.30,327.21 361.39,329.85 361.48,332.34 361.57,334.67 361.65,336.83 361.74,338.83 361.83,340.67 361.91,342.32 362.00,343.81 362.09,345.12 362.18,346.25 362.26,347.21 362.35,347.98 362.44,348.57 362.52,348.98 362.61,349.20 362.70,349.24 362.78,349.10 362.87,348.77 362.96,348.25 363.05,347.56 363.13,346.67 363.22,345.61 363.31,344.36 363.39,342.94 363.48,341.33 363.57,339.55 363.65,337.59 363.74,335.46 363.83,333.16 363.91,330.69 364.00,328.06 364.09,325.27 364.18,322.31 364.26,319.20 364.35,315.94 364.44,312.54 364.52,308.99 364.61,305.30 364.70,301.48 364.79,297.53 364.87,293.45 364.96,289.25 365.05,284.94 365.13,280.52 365.22,276.00 365.31,271.38 365.39,266.67 365.48,261.87 365.57,256.99 365.65,252.04 365.74,247.02 365.83,241.94 365.92,236.80 366.00,231.62 366.09,226.39 366.18,221.13 366.26,215.85 366.35,210.54 366.44,205.22 366.52,199.89 366.61,194.56 366.70,189.24 366.79,183.93 366.87,178.64 366.96,173.38 367.05,168.16 367.13,162.97 367.22,157.84 367.31,152.76 367.39,147.74 367.48,142.79 367.57,137.92 367.66,133.13 367.74,128.43 367.83,123.82 367.92,119.31 368.00,114.91 368.09,110.63 368.18,106.46 368.26,102.42 368.35,98.50 368.44,94.73 368.53,91.09 368.61,87.60 368.70,84.26 368.79,81.08 368.87,78.06 368.96,75.20 369.05,72.51 369.13,69.99 369.22,67.65 369.31,65.49 369.40,63.51 369.48,61.71 369.57,60.10 369.66,58.69 369.74,57.47 369.83,56.44 369.92,55.60 370.00,54.97 370.09,54.53 370.18,54.30 370.27,54.26 370.35,54.42 370.44,54.79 370.53,55.36 370.61,56.12 370.70,57.09 370.79,58.25 370.88,59.61 370.96,61.17 371.05,62.92 371.14,64.86 371.22,66.98 371.31,69.30 371.40,71.80 371.48,74.48 371.57,77.33 371.66,80.36 371.75,83.56 371.83,86.92 371.92,90.44 372.01,94.12 372.09,97.95 372.18,101.93 372.27,106.04 372.35,110.30 372.44,114.68 372.53,119.18 372.62,123.80 372.70,128.53 372.79,133.37 372.88,138.30 372.96,143.33 373.05,148.43 373.14,153.62 373.22,158.88 373.31,164.20 373.40,169.57 373.49,174.99 373.57,180.45 373.66,185.95 373.75,191.47 373.83,197.00 373.92,202.55 374.01,208.10 374.09,213.64 374.18,219.16 374.27,224.67 374.36,230.14 374.44,235.58 374.53,240.97 374.62,246.30 374.70,251.58 374.79,256.79 374.88,261.92 374.96,266.97 375.05,271.92 375.14,276.78 375.23,281.54 375.31,286.18 375.40,290.70 375.49,295.09 375.57,299.36 375.66,303.48 375.75,307.46 375.83,311.29 375.92,314.97 376.01,318.48 376.10,321.82 376.18,325.00 376.27,327.99 376.36,330.80 376.44,333.43 376.53,335.87 376.62,338.11 376.70,340.16 376.79,342.00 376.88,343.64 376.97,345.08 377.05,346.30 377.14,347.32 377.23,348.12 377.31,348.71 377.40,349.09 377.49,349.24 377.57,349.19 377.66,348.91 377.75,348.42 377.84,347.71 377.92,346.79 378.01,345.65 378.10,344.30 378.18,342.73 378.27,340.96 378.36,338.98 378.44,336.80 378.53,334.42 378.62,331.83 378.70,329.06 378.79,326.09 378.88,322.94 378.97,319.60 379.05,316.09 379.14,312.40 379.23,308.55 379.31,304.54 379.40,300.37 379.49,296.05 379.58,291.59 379.66,286.99 379.75,282.26 379.84,277.41 379.92,272.44 380.01,267.36 380.10,262.18 380.18,256.91 380.27,251.56 380.36,246.12 380.44,240.62 380.53,235.05 380.62,229.43 380.71,223.77 380.79,218.07 380.88,212.34 380.97,206.60 381.05,200.84 381.14,195.09 381.23,189.34 381.31,183.61 381.40,177.90 381.49,172.23 381.58,166.60 381.66,161.02 381.75,155.50 381.84,150.05 381.92,144.68 382.01,139.39 382.10,134.19 382.19,129.10 382.27,124.12 382.36,119.25 382.45,114.51 382.53,109.90 382.62,105.44 382.71,101.12 382.79,96.95 382.88,92.94 382.97,89.11 383.06,85.44 383.14,81.95 383.23,78.65 383.32,75.54 383.40,72.63 383.49,69.91 383.58,67.40 383.66,65.10 383.75,63.01 383.84,61.14 383.92,59.48 384.01,58.05 384.10,56.85 384.19,55.87 384.27,55.12 384.36,54.60 384.45,54.31 384.53,54.26 384.62,54.44 384.71,54.85 384.80,55.49 384.88,56.36 384.97,57.47 385.06,58.80 385.14,60.36 385.23,62.15 385.32,64.16 385.40,66.39 385.49,68.83 385.58,71.49 385.66,74.36 385.75,77.43 385.84,80.70 385.93,84.17 386.01,87.83 386.10,91.67 386.19,95.68 386.27,99.87 386.36,104.23 386.45,108.74 386.53,113.41 386.62,118.22 386.71,123.17 386.80,128.24 386.88,133.44 386.97,138.75 387.06,144.16 387.14,149.67 387.23,155.27 387.32,160.94 387.40,166.68 387.49,172.48 387.58,178.33 387.67,184.22 387.75,190.15 387.84,196.09 387.93,202.05 388.01,208.01 388.10,213.96 388.19,219.89 388.27,225.80 388.36,231.67 388.45,237.49 388.54,243.25 388.62,248.96 388.71,254.58 388.80,260.12 388.88,265.57 388.97,270.91 389.06,276.15 389.14,281.26 389.23,286.24 389.32,291.09 389.41,295.79 389.49,300.33 389.58,304.72 389.67,308.93 389.75,312.97 389.84,316.83 389.93,320.50 390.01,323.97 390.10,327.24 390.19,330.30 390.28,333.14 390.36,335.77 390.45,338.18 390.54,340.36 390.62,342.30 390.71,344.02 390.80,345.49 390.88,346.73 390.97,347.72 391.06,348.47 391.15,348.97 391.23,349.22 391.32,349.22 391.41,348.98 391.49,348.48 391.58,347.74 391.67,346.75 391.75,345.51 391.84,344.03 391.93,342.31 392.02,340.35 392.10,338.16 392.19,335.73 392.28,333.07 392.36,330.18 392.45,327.08 392.54,323.76 392.62,320.23 392.71,316.50 392.80,312.57 392.89,308.45 392.97,304.14 393.06,299.66 393.15,295.01 393.23,290.19 393.32,285.22 393.41,280.11 393.50,274.86 393.58,269.48 393.67,263.98 393.76,258.37 393.84,252.66 393.93,246.86 394.02,240.98 394.10,235.03 394.19,229.02 394.28,222.96 394.37,216.86 394.45,210.74 394.54,204.59 394.63,198.44 394.71,192.28 394.80,186.15 394.89,180.04 394.97,173.96 395.06,167.93 395.15,161.96 395.24,156.05 395.32,150.22 395.41,144.48 395.50,138.84 395.58,133.30 395.67,127.88 395.76,122.60 395.84,117.44 395.93,112.44 396.02,107.59 396.11,102.90 396.19,98.39 396.28,94.06 396.37,89.91 396.45,85.97 396.54,82.22 396.63,78.69 396.71,75.37 396.80,72.28 396.89,69.41 396.98,66.78 397.06,64.39 397.15,62.25 397.24,60.35 397.32,58.70 397.41,57.31 397.50,56.17 397.58,55.30 397.67,54.69 397.76,54.34 397.85,54.25 397.93,54.43 398.02,54.88 398.11,55.59 398.19,56.56 398.28,57.80 398.37,59.29 398.45,61.04 398.54,63.05 398.63,65.31 398.71,67.81 398.80,70.56 398.89,73.55 398.98,76.77 399.06,80.22 399.15,83.90 399.24,87.78 399.32,91.88 399.41,96.18 399.50,100.67 399.59,105.35 399.67,110.21 399.76,115.23 399.85,120.42 399.93,125.76 400.02,131.24 400.11,136.85 400.19,142.58 400.28,148.42 400.37,154.36 400.45,160.39 400.54,166.50 400.63,172.68 400.72,178.91 400.80,185.19 400.89,191.50 400.98,197.84 401.06,204.18 401.15,210.52 401.24,216.85 401.32,223.15 401.41,229.41 401.50,235.63 401.59,241.78 401.67,247.87 401.76,253.87 401.85,259.77 401.93,265.57 402.02,271.25 402.11,276.81 402.20,282.23 402.28,287.50 402.37,292.61 402.46,297.55 402.54,302.31 402.63,306.89 402.72,311.27 402.80,315.45 402.89,319.42 402.98,323.17 403.06,326.69 403.15,329.97 403.24,333.02 403.33,335.81 403.41,338.36 403.50,340.65 403.59,342.68 403.67,344.44 403.76,345.93 403.85,347.15 403.94,348.09 404.02,348.76 404.11,349.14 404.20,349.25 404.28,349.07 404.37,348.62 404.46,347.88 404.54,346.87 404.63,345.57 404.72,344.00 404.81,342.16 404.89,340.05 404.98,337.67 405.07,335.04 405.15,332.14 405.24,328.99 405.33,325.60 405.41,321.97 405.50,318.10 405.59,314.01 405.68,309.70 405.76,305.18 405.85,300.46 405.94,295.55 406.02,290.45 406.11,285.18 406.20,279.75 406.28,274.16 406.37,268.43 406.46,262.57 406.54,256.59 406.63,250.49 406.72,244.30 406.81,238.03 406.89,231.68 406.98,225.27 407.07,218.82 407.15,212.32 407.24,205.81 407.33,199.28 407.42,192.76 407.50,186.25 407.59,179.77 407.68,173.33 407.76,166.94 407.85,160.62 407.94,154.38 408.02,148.22 408.11,142.18 408.20,136.24 408.28,130.43 408.37,124.77 408.46,119.25 408.55,113.89 408.63,108.71 408.72,103.70 408.81,98.89 408.89,94.29 408.98,89.89 409.07,85.72 409.15,81.77 409.24,78.06 409.33,74.60 409.42,71.39 409.50,68.43 409.59,65.75 409.68,63.33 409.76,61.19 409.85,59.33 409.94,57.76 410.02,56.47 410.11,55.47 410.20,54.77 410.29,54.36 410.37,54.25 410.46,54.44 410.55,54.92 410.63,55.70 410.72,56.77 410.81,58.14 410.89,59.80 410.98,61.74 411.07,63.97 411.16,66.48 411.24,69.27 411.33,72.32 411.42,75.64 411.50,79.22 411.59,83.04 411.68,87.11 411.76,91.42 411.85,95.95 411.94,100.70 412.03,105.65 412.11,110.81 412.20,116.15 412.29,121.67 412.37,127.36 412.46,133.20 412.55,139.18 412.63,145.29 412.72,151.53 412.81,157.86 412.90,164.29 412.98,170.80 413.07,177.38 413.16,184.01 413.24,190.68 413.33,197.37 413.42,204.08 413.50,210.78 413.59,217.47 413.68,224.12 413.77,230.74 413.85,237.29 413.94,243.78 414.03,250.17 414.11,256.48 414.20,262.67 414.29,268.73 414.38,274.66 414.46,280.44 414.55,286.05 414.64,291.49 414.72,296.75 414.81,301.81 414.90,306.66 414.98,311.30 415.07,315.70 415.16,319.87 415.25,323.80 415.33,327.46 415.42,330.87 415.51,334.00 415.59,336.86 415.68,339.43 415.77,341.72 415.85,343.71 415.94,345.40 416.03,346.79 416.12,347.87 416.20,348.64 416.29,349.10 416.38,349.25 416.46,349.09 416.55,348.61 416.64,347.82 416.72,346.72 416.81,345.31 416.90,343.60 416.99,341.58 417.07,339.26 417.16,336.65 417.25,333.75 417.33,330.57 417.42,327.11 417.51,323.38 417.59,319.39 417.68,315.14 417.77,310.65 417.86,305.92 417.94,300.97 418.03,295.81 418.12,290.43 418.20,284.87 418.29,279.13 418.38,273.21 418.46,267.14 418.55,260.93 418.64,254.58 418.73,248.12 418.81,241.56 418.90,234.90 418.99,228.18 419.07,221.39 419.16,214.56 419.25,207.69 419.33,200.82 419.42,193.94 419.51,187.07 419.60,180.24 419.68,173.45 419.77,166.72 419.86,160.06 419.94,153.49 420.03,147.03 420.12,140.68 420.20,134.46 420.29,128.39 420.38,122.48 420.47,116.74 420.55,111.18 420.64,105.83 420.73,100.68 420.81,95.75 420.90,91.05 420.99,86.60 421.07,82.39 421.16,78.45 421.25,74.78 421.33,71.39 421.42,68.29 421.51,65.48 421.60,62.98 421.68,60.78 421.77,58.89 421.86,57.32 421.94,56.07 422.03,55.14 422.12,54.54 422.21,54.27 422.29,54.32 422.38,54.71 422.47,55.42 422.55,56.46 422.64,57.83 422.73,59.52 422.81,61.52 422.90,63.85 422.99,66.48 423.07,69.42 423.16,72.65 423.25,76.18 423.34,79.99 423.42,84.08 423.51,88.43 423.60,93.04 423.68,97.90 423.77,102.99 423.86,108.31 423.94,113.84 424.03,119.57 424.12,125.49 424.21,131.59 424.29,137.85 424.38,144.25 424.47,150.79 424.55,157.44 424.64,164.20 424.73,171.05 424.81,177.96 424.90,184.94 424.99,191.96 425.08,199.00 425.16,206.05 425.25,213.09 425.34,220.11 425.42,227.09 425.51,234.01 425.60,240.87 425.69,247.63 425.77,254.29 425.86,260.84 425.95,267.25 426.03,273.51 426.12,279.61 426.21,285.53 426.29,291.26 426.38,296.79 426.47,302.10 426.55,307.18 426.64,312.02 426.73,316.60 426.82,320.92 426.90,324.97 426.99,328.73 427.08,332.19 427.16,335.36 427.25,338.22 427.34,340.76 427.43,342.97 427.51,344.86 427.60,346.42 427.69,347.64 427.77,348.52 427.86,349.06 427.95,349.25 428.03,349.10 428.12,348.60 428.21,347.76 428.30,346.58 428.38,345.05 428.47,343.19 428.56,341.00 428.64,338.48 428.73,335.63 428.82,332.47 428.90,329.00 428.99,325.23 429.08,321.17 429.16,316.82 429.25,312.20 429.34,307.32 429.43,302.18 429.51,296.81 429.60,291.21 429.69,285.39 429.77,279.37 429.86,273.17 429.95,266.80 430.04,260.27 430.12,253.59 430.21,246.80 430.30,239.89 430.38,232.89 430.47,225.81 430.56,218.67 430.64,211.49 430.73,204.28 430.82,197.06 430.90,189.86 430.99,182.68 431.08,175.54 431.17,168.46 431.25,161.46 431.34,154.56 431.43,147.76 431.51,141.09 431.60,134.57 431.69,128.21 431.77,122.02 431.86,116.02 431.95,110.22 432.04,104.65 432.12,99.31 432.21,94.21 432.30,89.38 432.38,84.81 432.47,80.53 432.56,76.53 432.64,72.85 432.73,69.47 432.82,66.41 432.91,63.68 432.99,61.29 433.08,59.24 433.17,57.54 433.25,56.18 433.34,55.18 433.43,54.54 433.51,54.26 433.60,54.34 433.69,54.79 433.78,55.59 433.86,56.75 433.95,58.27 434.04,60.14 434.12,62.35 434.21,64.92 434.30,67.82 434.38,71.05 434.47,74.60 434.56,78.47 434.65,82.64 434.73,87.11 434.82,91.87 434.91,96.90 434.99,102.19 435.08,107.72 435.17,113.50 435.25,119.49 435.34,125.69 435.43,132.08 435.52,138.65 435.60,145.37 435.69,152.24 435.78,159.24 435.86,166.34 435.95,173.53 436.04,180.80 436.12,188.12 436.21,195.48 436.30,202.85 436.39,210.23 436.47,217.58 436.56,224.90 436.65,232.17 436.73,239.36 436.82,246.46 436.91,253.45 437.00,260.31 437.08,267.02 437.17,273.58 437.26,279.95 437.34,286.13 437.43,292.10 437.52,297.84 437.60,303.35 437.69,308.59 437.78,313.57 437.87,318.27 437.95,322.67 438.04,326.77 438.13,330.55 438.21,334.01 438.30,337.13 438.39,339.91 438.47,342.34 438.56,344.41 438.65,346.12 438.74,347.46 438.82,348.43 438.91,349.03 439.00,349.25 439.08,349.09 439.17,348.56 439.26,347.65 439.34,346.36 439.43,344.71 439.52,342.68 439.61,340.30 439.69,337.56 439.78,334.46 439.87,331.03 439.95,327.26 440.04,323.17 440.13,318.76 440.21,314.05 440.30,309.05 440.39,303.77 440.48,298.22 440.56,292.42 440.65,286.39 440.74,280.13 440.82,273.67 440.91,267.02 441.00,260.20 441.08,253.23 441.17,246.11 441.26,238.88 441.35,231.56 441.43,224.15 441.52,216.68 441.61,209.17 441.69,201.63 441.78,194.10 441.87,186.58 441.95,179.10 442.04,171.68 442.13,164.33 442.22,157.08 442.30,149.94 442.39,142.94 442.48,136.08 442.56,129.40 442.65,122.91 442.74,116.62 442.82,110.55 442.91,104.73 443.00,99.15 443.08,93.85 443.17,88.82 443.26,84.10 443.35,79.68 443.43,75.58 443.52,71.82 443.61,68.40 443.69,65.33 443.78,62.63 443.87,60.29 443.95,58.32 444.04,56.74 444.13,55.54 444.22,54.73 444.30,54.31 444.39,54.29 444.48,54.65 444.56,55.41 444.65,56.56 444.74,58.10 444.82,60.03 444.91,62.33 445.00,65.01 445.09,68.05 445.17,71.46 445.26,75.21 445.35,79.31 445.43,83.73 445.52,88.48 445.61,93.53 445.69,98.87 445.78,104.49 445.87,110.38 445.96,116.51 446.04,122.88 446.13,129.46 446.22,136.24 446.30,143.20 446.39,150.32 446.48,157.58 446.56,164.96 446.65,172.45 446.74,180.02 446.83,187.64 446.91,195.31 447.00,203.00" fill="none" stroke="#e8e800" stroke-width="1.20" stroke-linejoin="round"/>
<path d="M447.00,203.00 447.09,210.69 447.17,218.36 447.26,225.98 447.35,233.55 447.44,241.02 447.52,248.39 447.61,255.64 447.70,262.74 447.78,269.68 447.87,276.43 447.96,282.99 448.04,289.32 448.13,295.41 448.22,301.25 448.30,306.82 448.39,312.10 448.48,317.08 448.57,321.74 448.65,326.07 448.74,330.07 448.83,333.71 448.91,336.99 449.00,339.89 449.09,342.42 449.18,344.56 449.26,346.30 449.35,347.64 449.44,348.58 449.52,349.12 449.61,349.24 449.70,348.96 449.78,348.27 449.87,347.17 449.96,345.66 450.05,343.76 450.13,341.46 450.22,338.76 450.31,335.69 450.39,332.24 450.48,328.43 450.57,324.26 450.65,319.75 450.74,314.90 450.83,309.74 450.91,304.27 451.00,298.52 451.09,292.49 451.18,286.21 451.26,279.68 451.35,272.94 451.44,265.99 451.52,258.86 451.61,251.56 451.70,244.13 451.78,236.57 451.87,228.91 451.96,221.17 452.05,213.38 452.13,205.55 452.22,197.70 452.31,189.87 452.39,182.06 452.48,174.31 452.57,166.64 452.66,159.06 452.74,151.60 452.83,144.28 452.92,137.12 453.00,130.14 453.09,123.37 453.18,116.81 453.26,110.50 453.35,104.44 453.44,98.66 453.52,93.17 453.61,87.99 453.70,83.14 453.79,78.62 453.87,74.45 453.96,70.65 454.05,67.22 454.13,64.17 454.22,61.52 454.31,59.27 454.39,57.43 454.48,56.01 454.57,55.00 454.66,54.41 454.74,54.25 454.83,54.52 454.92,55.21 455.00,56.32 455.09,57.85 455.18,59.80 455.27,62.16 455.35,64.93 455.44,68.09 455.53,71.64 455.61,75.57 455.70,79.87 455.79,84.52 455.87,89.52 455.96,94.84 456.05,100.48 456.13,106.41 456.22,112.62 456.31,119.09 456.40,125.81 456.48,132.75 456.57,139.89 456.66,147.22 456.74,154.71 456.83,162.34 456.92,170.08 457.00,177.93 457.09,185.84 457.18,193.80 457.27,201.79 457.35,209.78 457.44,217.75 457.53,225.68 457.61,233.54 457.70,241.31 457.79,248.96 457.88,256.48 457.96,263.83 458.05,271.01 458.14,277.98 458.22,284.73 458.31,291.24 458.40,297.49 458.48,303.45 458.57,309.11 458.66,314.46 458.75,319.47 458.83,324.14 458.92,328.44 459.01,332.37 459.09,335.91 459.18,339.06 459.27,341.79 459.35,344.11 459.44,346.01 459.53,347.47 459.62,348.50 459.70,349.09 459.79,349.24 459.88,348.95 459.96,348.22 460.05,347.05 460.14,345.45 460.22,343.41 460.31,340.95 460.40,338.07 460.49,334.78 460.57,331.08 460.66,327.00 460.75,322.54 460.83,317.71 460.92,312.53 461.01,307.02 461.09,301.18 461.18,295.05 461.27,288.63 461.35,281.94 461.44,275.01 461.53,267.86 461.62,260.50 461.70,252.97 461.79,245.27 461.88,237.44 461.96,229.50 462.05,221.48 462.14,213.39 462.23,205.26 462.31,197.12 462.40,188.99 462.49,180.90 462.57,172.87 462.66,164.92 462.75,157.09 462.83,149.39 462.92,141.84 463.01,134.48 463.10,127.32 463.18,120.39 463.27,113.70 463.36,107.28 463.44,101.16 463.53,95.33 463.62,89.84 463.70,84.68 463.79,79.88 463.88,75.46 463.96,71.43 464.05,67.79 464.14,64.57 464.23,61.77 464.31,59.40 464.40,57.48 464.49,55.99 464.57,54.96 464.66,54.38 464.75,54.26 464.83,54.60 464.92,55.39 465.01,56.64 465.10,58.34 465.18,60.48 465.27,63.07 465.36,66.08 465.44,69.53 465.53,73.38 465.62,77.64 465.71,82.28 465.79,87.30 465.88,92.68 465.97,98.40 466.05,104.44 466.14,110.79 466.23,117.43 466.31,124.34 466.40,131.49 466.49,138.86 466.57,146.43 466.66,154.18 466.75,162.08 466.84,170.11 466.92,178.24 467.01,186.44 467.10,194.70 467.18,202.98 467.27,211.26 467.36,219.51 467.44,227.71 467.53,235.83 467.62,243.85 467.71,251.73 467.79,259.46 467.88,267.01 467.97,274.35 468.05,281.46 468.14,288.33 468.23,294.92 468.32,301.21 468.40,307.20 468.49,312.84 468.58,318.14 468.66,323.07 468.75,327.61 468.84,331.75 468.92,335.48 469.01,338.78 469.10,341.65 469.19,344.07 469.27,346.03 469.36,347.53 469.45,348.57 469.53,349.14 469.62,349.23 469.71,348.85 469.79,348.00 469.88,346.67 469.97,344.88 470.06,342.63 470.14,339.93 470.23,336.78 470.32,333.19 470.40,329.18 470.49,324.75 470.58,319.93 470.66,314.72 470.75,309.15 470.84,303.23 470.92,296.97 471.01,290.41 471.10,283.56 471.19,276.44 471.27,269.07 471.36,261.49 471.45,253.71 471.53,245.75 471.62,237.65 471.71,229.44 471.80,221.13 471.88,212.75 471.97,204.33 472.06,195.91 472.14,187.50 472.23,179.14 472.32,170.84 472.40,162.65 472.49,154.58 472.58,146.66 472.67,138.92 472.75,131.38 472.84,124.08 472.93,117.02 473.01,110.24 473.10,103.76 473.19,97.60 473.27,91.79 473.36,86.33 473.45,81.25 473.53,76.57 473.62,72.29 473.71,68.45 473.80,65.04 473.88,62.08 473.97,59.59 474.06,57.56 474.14,56.01 474.23,54.95 474.32,54.37 474.40,54.27 474.49,54.67 474.58,55.56 474.67,56.93 474.75,58.78 474.84,61.11 474.93,63.91 475.01,67.17 475.10,70.88 475.19,75.02 475.28,79.59 475.36,84.57 475.45,89.95 475.54,95.69 475.62,101.80 475.71,108.24 475.80,114.99 475.88,122.04 475.97,129.36 476.06,136.92 476.14,144.70 476.23,152.68 476.32,160.82 476.41,169.10 476.49,177.50 476.58,185.98 476.67,194.51 476.75,203.07 476.84,211.64 476.93,220.16 477.01,228.63 477.10,237.02 477.19,245.28 477.28,253.40 477.36,261.35 477.45,269.10 477.54,276.62 477.62,283.89 477.71,290.88 477.80,297.58 477.88,303.95 477.97,309.97 478.06,315.63 478.15,320.90 478.23,325.77 478.32,330.22 478.41,334.23 478.49,337.79 478.58,340.89 478.67,343.51 478.75,345.65 478.84,347.30 478.93,348.45 479.02,349.09 479.10,349.24 479.19,348.88 479.28,348.01 479.36,346.64 479.45,344.78 479.54,342.42 479.62,339.58 479.71,336.26 479.80,332.48 479.89,328.25 479.97,323.58 480.06,318.49 480.15,312.99 480.23,307.11 480.32,300.86 480.41,294.27 480.50,287.36 480.58,280.15 480.67,272.67 480.76,264.94 480.84,256.98 480.93,248.84 481.02,240.52 481.10,232.07 481.19,223.52 481.28,214.88 481.37,206.20 481.45,197.50 481.54,188.81 481.63,180.16 481.71,171.58 481.80,163.11 481.89,154.77 481.97,146.60 482.06,138.61 482.15,130.84 482.24,123.32 482.32,116.07 482.41,109.11 482.50,102.48 482.58,96.20 482.67,90.28 482.76,84.76 482.84,79.64 482.93,74.95 483.02,70.71 483.11,66.92 483.19,63.61 483.28,60.79 483.37,58.46 483.45,56.63 483.54,55.32 483.63,54.53 483.71,54.25 483.80,54.50 483.89,55.26 483.97,56.55 484.06,58.35 484.15,60.66 484.24,63.46 484.32,66.77 484.41,70.55 484.50,74.79 484.58,79.49 484.67,84.63 484.76,90.19 484.85,96.14 484.93,102.47 485.02,109.16 485.11,116.18 485.19,123.50 485.28,131.11 485.37,138.97 485.45,147.06 485.54,155.35 485.63,163.81 485.72,172.40 485.80,181.10 485.89,189.88 485.98,198.70 486.06,207.54 486.15,216.36 486.24,225.13 486.32,233.82 486.41,242.39 486.50,250.82 486.58,259.08 486.67,267.13 486.76,274.95 486.85,282.50 486.93,289.77 487.02,296.72 487.11,303.33 487.19,309.58 487.28,315.43 487.37,320.88 487.45,325.90 487.54,330.47 487.63,334.57 487.72,338.19 487.80,341.32 487.89,343.94 487.98,346.04 488.06,347.63 488.15,348.68 488.24,349.19 488.33,349.17 488.41,348.61 488.50,347.52 488.59,345.89 488.67,343.74 488.76,341.07 488.85,337.88 488.93,334.20 489.02,330.04 489.11,325.40 489.19,320.31 489.28,314.78 489.37,308.83 489.46,302.49 489.54,295.78 489.63,288.72 489.72,281.34 489.80,273.66 489.89,265.72 489.98,257.54 490.06,249.15 490.15,240.59 490.24,231.88 490.33,223.05 490.41,214.15 490.50,205.19 490.59,196.22 490.67,187.27 490.76,178.37 490.85,169.55 490.93,160.85 491.02,152.30 491.11,143.93 491.20,135.77 491.28,127.86 491.37,120.22 491.46,112.88 491.54,105.86 491.63,99.21 491.72,92.93 491.81,87.06 491.89,81.61 491.98,76.61 492.07,72.07 492.15,68.02 492.24,64.47 492.33,61.43 492.41,58.91 492.50,56.93 492.59,55.49 492.68,54.59 492.76,54.25 492.85,54.47 492.94,55.23 493.02,56.55 493.11,58.41 493.20,60.81 493.28,63.75 493.37,67.20 493.46,71.16 493.54,75.62 493.63,80.55 493.72,85.94 493.81,91.77 493.89,98.01 493.98,104.66 494.07,111.66 494.15,119.02 494.24,126.69 494.33,134.64 494.42,142.85 494.50,151.29 494.59,159.92 494.68,168.71 494.76,177.63 494.85,186.64 494.94,195.72 495.02,204.82 495.11,213.91 495.20,222.96 495.29,231.92 495.37,240.78 495.46,249.49 495.55,258.02 495.63,266.34 495.72,274.41 495.81,282.21 495.89,289.70 495.98,296.85 496.07,303.65 496.15,310.05 496.24,316.04 496.33,321.60 496.42,326.69 496.50,331.31 496.59,335.43 496.68,339.04 496.76,342.12 496.85,344.66 496.94,346.65 497.02,348.08 497.11,348.95 497.20,349.25 497.29,348.98 497.37,348.14 497.46,346.74 497.55,344.77 497.63,342.25 497.72,339.19 497.81,335.59 497.90,331.47 497.98,326.85 498.07,321.74 498.16,316.17 498.24,310.15 498.33,303.70 498.42,296.86 498.50,289.64 498.59,282.08 498.68,274.21 498.76,266.05 498.85,257.64 498.94,249.00 499.03,240.18 499.11,231.21 499.20,222.12 499.29,212.95 499.37,203.73 499.46,194.50 499.55,185.30 499.63,176.16 499.72,167.11 499.81,158.20 499.90,149.46 499.98,140.93 500.07,132.62 500.16,124.59 500.24,116.86 500.33,109.46 500.42,102.43 500.50,95.78 500.59,89.55 500.68,83.76 500.77,78.43 500.85,73.59 500.94,69.26 501.03,65.44 501.11,62.17 501.20,59.45 501.29,57.29 501.38,55.70 501.46,54.69 501.55,54.27 501.64,54.42 501.72,55.17 501.81,56.50 501.90,58.40 501.98,60.88 502.07,63.92 502.16,67.51 502.25,71.63 502.33,76.27 502.42,81.42 502.51,87.05 502.59,93.13 502.68,99.66 502.77,106.59 502.85,113.90 502.94,121.57 503.03,129.57 503.12,137.85 503.20,146.39 503.29,155.16 503.38,164.11 503.46,173.22 503.55,182.45 503.64,191.76 503.72,201.11 503.81,210.46 503.90,219.78 503.98,229.03 504.07,238.18 504.16,247.18 504.25,256.00 504.33,264.60 504.42,272.95 504.51,281.02 504.59,288.76 504.68,296.16 504.77,303.18 504.86,309.78 504.94,315.96 505.03,321.67 505.12,326.89 505.20,331.61 505.29,335.80 505.38,339.45 505.46,342.54 505.55,345.06 505.64,346.99 505.73,348.34 505.81,349.08 505.90,349.23 505.99,348.77 506.07,347.72 506.16,346.07 506.25,343.83 506.33,341.00 506.42,337.61 506.51,333.66 506.59,329.16 506.68,324.15 506.77,318.63 506.86,312.63 506.94,306.18 507.03,299.29 507.12,292.00 507.20,284.34 507.29,276.33 507.38,268.02 507.47,259.43 507.55,250.60 507.64,241.57 507.73,232.37 507.81,223.05 507.90,213.63 507.99,204.16 508.07,194.68 508.16,185.22 508.25,175.83 508.34,166.55 508.42,157.41 508.51,148.45 508.60,139.71 508.68,131.22 508.77,123.02 508.86,115.15 508.94,107.64 509.03,100.51 509.12,93.81 509.20,87.55 509.29,81.77 509.38,76.48 509.47,71.72 509.55,67.50 509.64,63.83 509.73,60.74 509.81,58.24 509.90,56.34 509.99,55.04 510.07,54.36 510.16,54.30 510.25,54.85 510.34,56.02 510.42,57.80 510.51,60.19 510.60,63.17 510.68,66.73 510.77,70.86 510.86,75.54 510.95,80.76 511.03,86.48 511.12,92.70 511.21,99.37 511.29,106.48 511.38,113.99 511.47,121.87 511.55,130.09 511.64,138.62 511.73,147.41 511.81,156.44 511.90,165.67 511.99,175.04 512.08,184.54 512.16,194.11 512.25,203.71 512.34,213.31 512.42,222.86 512.51,232.32 512.60,241.66 512.68,250.83 512.77,259.79 512.86,268.51 512.95,276.95 513.03,285.07 513.12,292.83 513.21,300.21 513.29,307.17 513.38,313.69 513.47,319.72 513.55,325.26 513.64,330.26 513.73,334.72 513.82,338.61 513.90,341.92 513.99,344.62 514.08,346.71 514.16,348.19 514.25,349.03 514.34,349.24 514.42,348.82 514.51,347.76 514.60,346.08 514.69,343.78 514.77,340.86 514.86,337.34 514.95,333.24 515.03,328.57 515.12,323.35 515.21,317.61 515.30,311.36 515.38,304.64 515.47,297.47 515.56,289.88 515.64,281.91 515.73,273.59 515.82,264.96 515.90,256.05 515.99,246.91 516.08,237.56 516.16,228.06 516.25,218.44 516.34,208.75 516.43,199.02 516.51,189.30 516.60,179.64 516.69,170.07 516.77,160.63 516.86,151.37 516.95,142.33 517.03,133.54 517.12,125.05 517.21,116.89 517.30,109.11 517.38,101.72 517.47,94.77 517.56,88.29 517.64,82.30 517.73,76.84 517.82,71.92 517.90,67.57 517.99,63.81 518.08,60.65 518.17,58.11 518.25,56.21 518.34,54.94 518.43,54.32 518.51,54.35 518.60,55.02 518.69,56.35 518.77,58.31 518.86,60.91 518.95,64.14 519.04,67.97 519.12,72.39 519.21,77.39 519.30,82.94 519.38,89.01 519.47,95.59 519.56,102.64 519.64,110.13 519.73,118.03 519.82,126.30 519.91,134.91 519.99,143.82 520.08,152.99 520.17,162.38 520.25,171.94 520.34,181.64 520.43,191.44 520.52,201.28 520.60,211.12 520.69,220.93 520.78,230.65 520.86,240.25 520.95,249.68 521.04,258.90 521.12,267.86 521.21,276.53 521.30,284.86 521.38,292.83 521.47,300.39 521.56,307.51 521.65,314.16 521.73,320.30 521.82,325.91 521.91,330.97 521.99,335.44 522.08,339.32 522.17,342.58 522.25,345.20 522.34,347.18 522.43,348.51 522.52,349.17 522.60,349.17 522.69,348.50 522.78,347.17 522.86,345.18 522.95,342.54 523.04,339.26 523.12,335.36 523.21,330.86 523.30,325.76 523.39,320.11 523.47,313.92 523.56,307.21 523.65,300.03 523.73,292.39 523.82,284.35 523.91,275.92 524.00,267.16 524.08,258.09 524.17,248.77 524.26,239.23 524.34,229.52 524.43,219.67 524.52,209.75 524.60,199.78 524.69,189.82 524.78,179.91 524.87,170.10 524.95,160.43 525.04,150.95 525.13,141.70 525.21,132.72 525.30,124.06 525.39,115.75 525.47,107.83 525.56,100.35 525.65,93.32 525.74,86.79 525.82,80.79 525.91,75.35 526.00,70.48 526.08,66.22 526.17,62.59 526.26,59.59 526.34,57.25 526.43,55.57 526.52,54.57 526.61,54.25 526.69,54.61 526.78,55.65 526.87,57.37 526.95,59.76 527.04,62.80 527.13,66.49 527.21,70.81 527.30,75.74 527.39,81.25 527.48,87.32 527.56,93.93 527.65,101.04 527.74,108.62 527.82,116.63 527.91,125.05 528.00,133.82 528.08,142.91 528.17,152.28 528.26,161.88 528.35,171.67 528.43,181.60 528.52,191.63 528.61,201.71 528.69,211.80 528.78,221.83 528.87,231.78 528.95,241.59 529.04,251.21 529.13,260.61 529.21,269.73 529.30,278.53 529.39,286.98 529.48,295.02 529.56,302.63 529.65,309.77 529.74,316.40 529.82,322.50 529.91,328.02 530.00,332.96 530.09,337.27 530.17,340.95 530.26,343.97 530.35,346.32 530.43,347.99 530.52,348.97 530.61,349.25 530.69,348.83 530.78,347.72 530.87,345.91 530.96,343.42 531.04,340.26 531.13,336.44 531.22,331.98 531.30,326.91 531.39,321.23 531.48,314.99 531.56,308.20 531.65,300.91 531.74,293.15 531.83,284.94 531.91,276.34 532.00,267.38 532.09,258.11 532.17,248.56 532.26,238.79 532.35,228.84 532.43,218.76 532.52,208.59 532.61,198.39 532.69,188.20 532.78,178.07 532.87,168.06 532.96,158.20 533.04,148.55 533.13,139.15 533.22,130.06 533.30,121.30 533.39,112.93 533.48,104.98 533.57,97.49 533.65,90.51 533.74,84.06 533.83,78.18 533.91,72.89 534.00,68.22 534.09,64.19 534.17,60.82 534.26,58.14 534.35,56.15 534.43,54.86 534.52,54.28 534.61,54.42 534.70,55.27 534.78,56.83 534.87,59.09 534.96,62.05 535.04,65.68 535.13,69.97 535.22,74.91 535.31,80.46 535.39,86.60 535.48,93.31 535.57,100.54 535.65,108.27 535.74,116.46 535.83,125.06 535.91,134.04 536.00,143.36 536.09,152.96 536.17,162.80 536.26,172.83 536.35,183.01 536.44,193.28 536.52,203.59 536.61,213.90 536.70,224.15 536.78,234.30 536.87,244.28 536.96,254.07 537.05,263.59 537.13,272.82 537.22,281.70 537.31,290.19 537.39,298.24 537.48,305.82 537.57,312.90 537.65,319.42 537.74,325.37 537.83,330.71 537.91,335.42 538.00,339.47 538.09,342.84 538.18,345.51 538.26,347.47 538.35,348.72 538.44,349.23 538.52,349.02 538.61,348.08 538.70,346.41 538.78,344.03 538.87,340.94 538.96,337.16 539.05,332.70 539.13,327.60 539.22,321.87 539.31,315.53 539.39,308.64 539.48,301.21 539.57,293.28 539.65,284.89 539.74,276.09 539.83,266.91 539.92,257.41 540.00,247.63 540.09,237.62 540.18,227.42 540.26,217.09 540.35,206.69 540.44,196.26 540.53,185.85 540.61,175.52 540.70,165.32 540.79,155.29 540.87,145.50 540.96,135.99 541.05,126.81 541.13,118.00 541.22,109.61 541.31,101.68 541.39,94.25 541.48,87.36 541.57,81.05 541.66,75.34 541.74,70.26 541.83,65.85 541.92,62.12 542.00,59.10 542.09,56.80 542.18,55.22 542.26,54.39 542.35,54.30 542.44,54.96 542.53,56.36 542.61,58.50 542.70,61.37 542.79,64.94 542.87,69.21 542.96,74.16 543.05,79.75 543.13,85.96 543.22,92.77 543.31,100.13 543.40,108.01 543.48,116.36 543.57,125.16 543.66,134.34 543.74,143.87 543.83,153.70 543.92,163.78 544.00,174.05 544.09,184.47 544.18,194.97 544.27,205.52 544.35,216.05 544.44,226.50 544.53,236.84 544.61,246.99 544.70,256.92 544.79,266.56 544.88,275.88 544.96,284.82 545.05,293.33 545.14,301.38 545.22,308.91 545.31,315.90 545.40,322.30 545.48,328.08 545.57,333.22 545.66,337.68 545.75,341.43 545.83,344.47 545.92,346.78 546.01,348.33 546.09,349.13 546.18,349.17 546.27,348.45 546.35,346.97 546.44,344.74 546.53,341.76 546.62,338.06 546.70,333.66 546.79,328.57 546.88,322.82 546.96,316.44 547.05,309.46 547.14,301.93 547.22,293.87 547.31,285.33 547.40,276.35 547.49,266.99 547.57,257.28 547.66,247.28 547.75,237.04 547.83,226.61 547.92,216.06 548.01,205.42 548.09,194.76 548.18,184.14 548.27,173.61 548.36,163.22 548.44,153.03 548.53,143.09 548.62,133.46 548.70,124.18 548.79,115.31 548.88,106.89 548.96,98.96 549.05,91.57 549.14,84.76 549.22,78.56 549.31,73.01 549.40,68.13 549.49,63.95 549.57,60.50 549.66,57.79 549.75,55.84 549.83,54.66 549.92,54.25 550.01,54.62 550.10,55.77 550.18,57.68 550.27,60.36 550.36,63.79 550.44,67.95 550.53,72.81 550.62,78.36 550.70,84.57 550.79,91.39 550.88,98.81 550.97,106.77 551.05,115.23 551.14,124.16 551.23,133.50 551.31,143.21 551.40,153.23 551.49,163.51 551.57,174.00 551.66,184.63 551.75,195.36 551.84,206.13 551.92,216.88 552.01,227.54 552.10,238.08 552.18,248.42 552.27,258.51 552.36,268.31 552.44,277.75 552.53,286.78 552.62,295.36 552.70,303.45 552.79,310.99 552.88,317.95 552.97,324.28 553.05,329.97 553.14,334.96 553.23,339.24 553.31,342.78 553.40,345.57 553.49,347.58 553.58,348.81 553.66,349.25 553.75,348.89 553.84,347.75 553.92,345.81 554.01,343.10 554.10,339.62 554.18,335.40 554.27,330.46 554.36,324.82 554.44,318.51 554.53,311.58 554.62,304.04 554.71,295.95 554.79,287.35 554.88,278.29 554.97,268.80 555.05,258.95 555.14,248.79 555.23,238.37 555.32,227.75 555.40,216.98 555.49,206.13 555.58,195.26 555.66,184.41 555.75,173.66 555.84,163.06 555.92,152.67 556.01,142.54 556.10,132.73 556.18,123.30 556.27,114.29 556.36,105.76 556.45,97.75 556.53,90.31 556.62,83.47 556.71,77.28 556.79,71.77 556.88,66.97 556.97,62.91 557.06,59.60 557.14,57.08 557.23,55.35 557.32,54.42 557.40,54.30 557.49,54.99 557.58,56.49 557.66,58.78 557.75,61.87 557.84,65.72 557.92,70.33 558.01,75.65 558.10,81.68 558.19,88.37 558.27,95.68 558.36,103.59 558.45,112.03 558.53,120.98 558.62,130.37 558.71,140.16 558.79,150.29 558.88,160.71 558.97,171.36 559.06,182.18 559.14,193.11 559.23,204.09 559.32,215.06 559.40,225.96 559.49,236.73 559.58,247.31 559.66,257.63 559.75,267.65 559.84,277.30 559.93,286.54 560.01,295.30 560.10,303.54 560.19,311.22 560.27,318.30 560.36,324.72 560.45,330.46 560.54,335.48 560.62,339.75 560.71,343.26 560.80,345.97 560.88,347.88 560.97,348.97 561.06,349.24 561.14,348.68 561.23,347.29 561.32,345.10 561.40,342.09 561.49,338.30 561.58,333.74 561.67,328.44 561.75,322.42 561.84,315.73 561.93,308.39 562.01,300.45 562.10,291.95 562.19,282.95 562.27,273.48 562.36,263.61 562.45,253.38 562.54,242.86 562.62,232.11 562.71,221.18 562.80,210.14 562.88,199.06 562.97,187.98 563.06,176.98 563.14,166.11 563.23,155.45 563.32,145.05 563.41,134.96 563.49,125.25 563.58,115.98 563.67,107.18 563.75,98.93 563.84,91.25 563.93,84.21 564.01,77.82 564.10,72.15 564.19,67.21 564.28,63.03 564.36,59.64 564.45,57.07 564.54,55.31 564.62,54.40 564.71,54.32 564.80,55.09 564.88,56.69 564.97,59.12 565.06,62.37 565.15,66.42 565.23,71.24 565.32,76.81 565.41,83.10 565.49,90.07 565.58,97.68 565.67,105.90 565.75,114.66 565.84,123.92 565.93,133.64 566.02,143.75 566.10,154.19 566.19,164.91 566.28,175.84 566.36,186.93 566.45,198.10 566.54,209.30 566.62,220.46 566.71,231.51 566.80,242.39 566.89,253.04 566.97,263.39 567.06,273.40 567.15,282.99 567.23,292.11 567.32,300.71 567.41,308.74 567.50,316.15 567.58,322.90 567.67,328.95 567.76,334.27 567.84,338.81 567.93,342.57 568.02,345.50 568.10,347.60 568.19,348.85 568.28,349.25 568.37,348.79 568.45,347.47 568.54,345.31 568.63,342.30 568.71,338.48 568.80,333.86 568.89,328.47 568.97,322.33 569.06,315.49 569.15,307.99 569.23,299.86 569.32,291.15 569.41,281.93 569.50,272.23 569.58,262.11 569.67,251.64 569.76,240.87 569.84,229.88 569.93,218.71 570.02,207.45 570.11,196.14 570.19,184.87 570.28,173.69 570.37,162.68 570.45,151.89 570.54,141.40 570.63,131.26 570.71,121.53 570.80,112.27 570.89,103.54 570.98,95.38 571.06,87.85 571.15,80.99 571.24,74.84 571.32,69.44 571.41,64.82 571.50,61.01 571.58,58.04 571.67,55.91 571.76,54.64 571.85,54.25 571.93,54.73 572.02,56.08 572.11,58.30 572.19,61.37 572.28,65.27 572.37,69.99 572.45,75.49 572.54,81.74 572.63,88.71 572.72,96.35 572.80,104.62 572.89,113.47 572.98,122.85 573.06,132.70 573.15,142.96 573.24,153.58 573.32,164.49 573.41,175.62 573.50,186.91 573.59,198.30 573.67,209.70 573.76,221.06 573.85,232.31 573.93,243.38 574.02,254.20 574.11,264.71 574.19,274.84 574.28,284.54 574.37,293.74 574.45,302.39 574.54,310.44 574.63,317.84 574.72,324.54 574.80,330.51 574.89,335.70 574.98,340.08 575.06,343.64 575.15,346.34 575.24,348.16 575.33,349.11 575.41,349.16 575.50,348.33 575.59,346.61 575.67,344.02 575.76,340.56 575.85,336.26 575.93,331.15 576.02,325.26 576.11,318.61 576.20,311.26 576.28,303.24 576.37,294.60 576.46,285.40 576.54,275.69 576.63,265.53 576.72,254.97 576.80,244.10 576.89,232.96 576.98,221.63 577.07,210.17 577.15,198.67 577.24,187.17 577.33,175.77 577.41,164.52 577.50,153.49" fill="none" stroke="#e8e800" stroke-width="1.30" stroke-linejoin="round"/>
<path d="M577.50,153.49 577.59,142.76 577.67,132.39 577.76,122.43 577.85,112.96 577.93,104.03 578.02,95.70 578.11,88.01 578.20,81.01 578.28,74.76 578.37,69.28 578.46,64.61 578.54,60.78 578.63,57.82 578.72,55.73 578.80,54.55 578.89,54.27 578.98,54.89 579.07,56.42 579.15,58.84 579.24,62.14 579.33,66.30 579.41,71.30 579.50,77.10 579.59,83.67 579.67,90.97 579.76,98.96 579.85,107.58 579.94,116.78 580.02,126.51 580.11,136.71 580.20,147.32 580.28,158.26 580.37,169.47 580.46,180.89 580.55,192.44 580.63,204.05 580.72,215.64 580.81,227.16 580.89,238.52 580.98,249.65 581.07,260.48 581.15,270.96 581.24,281.01 581.33,290.56 581.41,299.57 581.50,307.97 581.59,315.71 581.68,322.74 581.76,329.02 581.85,334.50 581.94,339.16 582.02,342.97 582.11,345.89 582.20,347.91 582.28,349.02 582.37,349.21 582.46,348.48 582.55,346.83 582.63,344.27 582.72,340.81 582.81,336.49 582.89,331.32 582.98,325.34 583.07,318.58 583.15,311.08 583.24,302.90 583.33,294.08 583.42,284.68 583.50,274.75 583.59,264.36 583.68,253.58 583.76,242.47 583.85,231.10 583.94,219.54 584.02,207.87 584.11,196.15 584.20,184.47 584.29,172.90 584.37,161.50 584.46,150.36 584.55,139.54 584.63,129.11 584.72,119.14 584.81,109.69 584.89,100.81 584.98,92.58 585.07,85.04 585.16,78.23 585.24,72.21 585.33,67.00 585.42,62.66 585.50,59.19 585.59,56.63 585.68,54.99 585.77,54.28 585.85,54.51 585.94,55.68 586.03,57.78 586.11,60.79 586.20,64.71 586.29,69.50 586.37,75.13 586.46,81.57 586.55,88.79 586.63,96.72 586.72,105.33 586.81,114.55 586.90,124.34 586.98,134.62 587.07,145.33 587.16,156.41 587.24,167.78 587.33,179.37 587.42,191.11 587.50,202.91 587.59,214.72 587.68,226.44 587.77,238.00 587.85,249.34 587.94,260.37 588.03,271.03 588.11,281.24 588.20,290.95 588.29,300.08 588.38,308.58 588.46,316.39 588.55,323.47 588.64,329.76 588.72,335.23 588.81,339.84 588.90,343.56 588.98,346.36 589.07,348.23 589.16,349.15 589.25,349.11 589.33,348.13 589.42,346.19 589.51,343.32 589.59,339.53 589.68,334.85 589.77,329.30 589.85,322.93 589.94,315.76 590.03,307.86 590.12,299.26 590.20,290.03 590.29,280.22 590.38,269.90 590.46,259.13 590.55,247.99 590.64,236.54 590.72,224.87 590.81,213.04 590.90,201.13 590.99,189.23 591.07,177.41 591.16,165.74 591.25,154.30 591.33,143.17 591.42,132.43 591.51,122.13 591.59,112.36 591.68,103.16 591.77,94.61 591.86,86.76 591.94,79.67 592.03,73.37 592.12,67.91 592.20,63.33 592.29,59.66 592.38,56.92 592.46,55.13 592.55,54.31 592.64,54.46 592.73,55.57 592.81,57.65 592.90,60.68 592.99,64.63 593.07,69.50 593.16,75.23 593.25,81.80 593.33,89.17 593.42,97.28 593.51,106.08 593.60,115.52 593.68,125.53 593.77,136.04 593.86,146.99 593.94,158.31 594.03,169.92 594.12,181.74 594.20,193.69 594.29,205.70 594.38,217.69 594.46,229.57 594.55,241.28 594.64,252.72 594.73,263.82 594.81,274.52 594.90,284.73 594.99,294.40 595.07,303.45 595.16,311.82 595.25,319.46 595.34,326.32 595.42,332.35 595.51,337.51 595.60,341.76 595.68,345.08 595.77,347.45 595.86,348.84 595.94,349.25 596.03,348.67 596.12,347.11 596.21,344.57 596.29,341.08 596.38,336.65 596.47,331.32 596.55,325.12 596.64,318.09 596.73,310.28 596.81,301.73 596.90,292.52 596.99,282.69 597.08,272.32 597.16,261.46 597.25,250.21 597.34,238.63 597.42,226.79 597.51,214.79 597.60,202.69 597.68,190.59 597.77,178.55 597.86,166.68 597.94,155.03 598.03,143.70 598.12,132.76 598.21,122.28 598.29,112.34 598.38,103.00 598.47,94.33 598.55,86.38 598.64,79.22 598.73,72.88 598.82,67.41 598.90,62.86 598.99,59.24 599.08,56.59 599.16,54.93 599.25,54.26 599.34,54.60 599.42,55.94 599.51,58.27 599.60,61.57 599.68,65.83 599.77,71.02 599.86,77.10 599.95,84.03 600.03,91.76 600.12,100.25 600.21,109.43 600.29,119.24 600.38,129.62 600.47,140.49 600.56,151.79 600.64,163.43 600.73,175.33 600.82,187.42 600.90,199.60 600.99,211.81 601.08,223.95 601.16,235.93 601.25,247.69 601.34,259.13 601.42,270.19 601.51,280.77 601.60,290.82 601.69,300.25 601.77,309.01 601.86,317.03 601.95,324.26 602.03,330.65 602.12,336.15 602.21,340.73 602.30,344.35 602.38,346.99 602.47,348.62 602.56,349.24 602.64,348.85 602.73,347.44 602.82,345.02 602.90,341.61 602.99,337.23 603.08,331.91 603.16,325.69 603.25,318.62 603.34,310.73 603.43,302.08 603.51,292.74 603.60,282.76 603.69,272.22 603.77,261.19 603.86,249.74 603.95,237.95 604.03,225.92 604.12,213.71 604.21,201.41 604.30,189.12 604.38,176.91 604.47,164.87 604.56,153.09 604.64,141.64 604.73,130.61 604.82,120.08 604.90,110.11 604.99,100.78 605.08,92.15 605.17,84.29 605.25,77.25 605.34,71.07 605.43,65.81 605.51,61.50 605.60,58.17 605.69,55.85 605.78,54.55 605.86,54.28 605.95,55.04 606.04,56.84 606.12,59.65 606.21,63.46 606.30,68.25 606.38,73.97 606.47,80.59 606.56,88.07 606.64,96.35 606.73,105.37 606.82,115.07 606.91,125.38 606.99,136.24 607.08,147.56 607.17,159.27 607.25,171.27 607.34,183.50 607.43,195.85 607.51,208.25 607.60,220.61 607.69,232.84 607.78,244.84 607.86,256.55 607.95,267.87 608.04,278.73 608.12,289.04 608.21,298.73 608.30,307.74 608.38,316.00 608.47,323.44 608.56,330.03 608.65,335.71 608.73,340.43 608.82,344.17 608.91,346.90 608.99,348.59 609.08,349.24 609.17,348.84 609.25,347.39 609.34,344.91 609.43,341.40 609.52,336.89 609.60,331.42 609.69,325.02 609.78,317.74 609.86,309.63 609.95,300.75 610.04,291.16 610.12,280.92 610.21,270.12 610.30,258.82 610.39,247.12 610.47,235.08 610.56,222.81 610.65,210.38 610.73,197.89 610.82,185.42 610.91,173.07 611.00,160.92 611.08,149.06 611.17,137.58 611.26,126.55 611.34,116.07 611.43,106.20 611.52,97.02 611.60,88.59 611.69,80.97 611.78,74.22 611.87,68.39 611.95,63.52 612.04,59.65 612.13,56.81 612.21,55.01 612.30,54.27 612.39,54.60 612.47,55.99 612.56,58.44 612.65,61.92 612.74,66.42 612.82,71.90 612.91,78.32 613.00,85.64 613.08,93.80 613.17,102.75 613.26,112.42 613.34,122.74 613.43,133.63 613.52,145.03 613.61,156.83 613.69,168.97 613.78,181.35 613.87,193.88 613.95,206.47 614.04,219.02 614.13,231.46 614.21,243.67 614.30,255.59 614.39,267.12 614.47,278.17 614.56,288.66 614.65,298.52 614.74,307.68 614.82,316.06 614.91,323.61 615.00,330.27 615.08,335.98 615.17,340.72 615.26,344.44 615.35,347.11 615.43,348.72 615.52,349.25 615.61,348.70 615.69,347.07 615.78,344.37 615.87,340.62 615.95,335.85 616.04,330.09 616.13,323.39 616.22,315.79 616.30,307.35 616.39,298.13 616.48,288.19 616.56,277.62 616.65,266.49 616.74,254.87 616.82,242.87 616.91,230.55 617.00,218.02 617.09,205.37 617.17,192.69 617.26,180.07 617.35,167.61 617.43,155.40 617.52,143.54 617.61,132.10 617.69,121.17 617.78,110.84 617.87,101.18 617.95,92.27 618.04,84.17 618.13,76.94 618.22,70.63 618.30,65.30 618.39,60.98 618.48,57.71 618.56,55.51 618.65,54.40 618.74,54.38 618.83,55.46 618.91,57.63 619.00,60.88 619.09,65.18 619.17,70.50 619.26,76.80 619.35,84.03 619.43,92.15 619.52,101.09 619.61,110.78 619.69,121.15 619.78,132.13 619.87,143.63 619.96,155.57 620.04,167.86 620.13,180.40 620.22,193.11 620.30,205.88 620.39,218.63 620.48,231.25 620.57,243.65 620.65,255.74 620.74,267.43 620.83,278.62 620.91,289.24 621.00,299.20 621.09,308.43 621.17,316.86 621.26,324.43 621.35,331.07 621.43,336.74 621.52,341.39 621.61,344.98 621.70,347.50 621.78,348.92 621.87,349.22 621.96,348.41 622.04,346.49 622.13,343.48 622.22,339.39 622.31,334.26 622.39,328.13 622.48,321.04 622.57,313.04 622.65,304.19 622.74,294.57 622.83,284.24 622.91,273.28 623.00,261.78 623.09,249.82 623.17,237.49 623.26,224.89 623.35,212.11 623.44,199.24 623.52,186.40 623.61,173.67 623.70,161.15 623.78,148.93 623.87,137.12 623.96,125.80 624.04,115.05 624.13,104.97 624.22,95.62 624.31,87.08 624.39,79.41 624.48,72.68 624.57,66.94 624.65,62.22 624.74,58.58 624.83,56.02 624.91,54.59 625.00,54.28 625.09,55.10 625.18,57.05 625.26,60.11 625.35,64.25 625.44,69.45 625.52,75.67 625.61,82.86 625.70,90.97 625.79,99.93 625.87,109.67 625.96,120.12 626.05,131.21 626.13,142.84 626.22,154.93 626.31,167.38 626.39,180.09 626.48,192.98 626.57,205.94 626.65,218.87 626.74,231.67 626.83,244.23 626.92,256.48 627.00,268.30 627.09,279.61 627.18,290.32 627.26,300.35 627.35,309.61 627.44,318.04 627.52,325.57 627.61,332.14 627.70,337.70 627.79,342.21 627.87,345.63 627.96,347.93 628.05,349.10 628.13,349.12 628.22,347.99 628.31,345.73 628.39,342.34 628.48,337.86 628.57,332.32 628.66,325.76 628.74,318.24 628.83,309.80 628.92,300.52 629.00,290.47 629.09,279.72 629.18,268.36 629.26,256.48 629.35,244.16 629.44,231.52 629.53,218.64 629.61,205.62 629.70,192.57 629.79,179.59 629.87,166.78 629.96,154.25 630.05,142.08 630.13,130.38 630.22,119.23 630.31,108.74 630.40,98.97 630.48,90.00 630.57,81.92 630.66,74.77 630.74,68.62 630.83,63.51 630.92,59.50 631.00,56.60 631.09,54.85 631.18,54.25 631.27,54.82 631.35,56.54 631.44,59.41 631.53,63.41 631.61,68.49 631.70,74.63 631.79,81.78 631.88,89.88 631.96,98.86 632.05,108.66 632.14,119.20 632.22,130.39 632.31,142.15 632.40,154.38 632.48,167.00 632.57,179.89 632.66,192.95 632.75,206.09 632.83,219.20 632.92,232.17 633.01,244.90 633.09,257.29 633.18,269.24 633.27,280.66 633.35,291.45 633.44,301.53 633.53,310.82 633.62,319.24 633.70,326.73 633.79,333.22 633.88,338.66 633.96,343.01 634.05,346.24 634.14,348.31 634.22,349.21 634.31,348.93 634.40,347.48 634.48,344.86 634.57,341.09 634.66,336.21 634.75,330.26 634.83,323.27 634.92,315.30 635.01,306.43 635.09,296.71 635.18,286.23 635.27,275.07 635.36,263.32 635.44,251.07 635.53,238.43 635.62,225.48 635.70,212.35 635.79,199.12 635.88,185.92 635.96,172.83 636.05,159.98 636.14,147.47 636.23,135.38 636.31,123.84 636.40,112.91 636.49,102.70 636.57,93.29 636.66,84.76 636.75,77.16 636.83,70.58 636.92,65.05 637.01,60.62 637.10,57.34 637.18,55.23 637.27,54.30 637.36,54.56 637.44,56.02 637.53,58.66 637.62,62.46 637.70,67.39 637.79,73.41 637.88,80.48 637.97,88.53 638.05,97.50 638.14,107.32 638.23,117.92 638.31,129.19 638.40,141.06 638.49,153.42 638.57,166.19 638.66,179.24 638.75,192.48 638.84,205.79 638.92,219.08 639.01,232.23 639.10,245.13 639.18,257.68 639.27,269.77 639.36,281.31 639.44,292.21 639.53,302.36 639.62,311.70 639.70,320.13 639.79,327.60 639.88,334.04 639.97,339.40 640.05,343.63 640.14,346.70 640.23,348.57 640.31,349.25 640.40,348.71 640.49,346.97 640.58,344.03 640.66,339.92 640.75,334.68 640.84,328.34 640.92,320.96 641.01,312.60 641.10,303.32 641.18,293.20 641.27,282.33 641.36,270.79 641.45,258.68 641.53,246.10 641.62,233.15 641.71,219.94 641.79,206.57 641.88,193.17 641.97,179.83 642.05,166.67 642.14,153.80 642.23,141.32 642.32,129.34 642.40,117.96 642.49,107.27 642.58,97.36 642.66,88.31 642.75,80.20 642.84,73.10 642.92,67.07 643.01,62.15 643.10,58.40 643.18,55.83 643.27,54.48 643.36,54.35 643.45,55.44 643.53,57.76 643.62,61.27 643.71,65.95 643.79,71.77 643.88,78.67 643.97,86.60 644.05,95.49 644.14,105.27 644.23,115.86 644.32,127.16 644.40,139.09 644.49,151.55 644.58,164.43 644.66,177.62 644.75,191.02 644.84,204.51 644.92,217.98 645.01,231.31 645.10,244.40 645.19,257.14 645.27,269.41 645.36,281.12 645.45,292.17 645.53,302.45 645.62,311.90 645.71,320.42 645.80,327.94 645.88,334.41 645.97,339.76 646.06,343.95 646.14,346.94 646.23,348.71 646.32,349.25 646.40,348.54 646.49,346.59 646.58,343.42 646.66,339.06 646.75,333.54 646.84,326.90 646.93,319.20 647.01,310.51 647.10,300.90 647.19,290.45 647.27,279.25 647.36,267.39 647.45,254.97 647.53,242.10 647.62,228.88 647.71,215.44 647.80,201.87 647.88,188.30 647.97,174.84 648.06,161.61 648.14,148.71 648.23,136.27 648.32,124.37 648.40,113.14 648.49,102.65 648.58,93.01 648.67,84.29 648.75,76.56 648.84,69.91 648.93,64.37 649.01,60.00 649.10,56.84 649.19,54.92 649.27,54.25 649.36,54.84 649.45,56.68 649.54,59.76 649.62,64.06 649.71,69.53 649.80,76.14 649.88,83.82 649.97,92.51 650.06,102.14 650.14,112.62 650.23,123.87 650.32,135.79 650.41,148.27 650.49,161.22 650.58,174.52 650.67,188.05 650.75,201.71 650.84,215.36 650.93,228.90 651.02,242.22 651.10,255.18 651.19,267.69 651.28,279.63 651.36,290.91 651.45,301.42 651.54,311.07 651.62,319.78 651.71,327.48 651.80,334.09 651.88,339.56 651.97,343.85 652.06,346.91 652.15,348.71 652.23,349.25 652.32,348.51 652.41,346.50 652.49,343.24 652.58,338.75 652.67,333.08 652.75,326.26 652.84,318.37 652.93,309.47 653.02,299.63 653.10,288.94 653.19,277.49 653.28,265.38 653.36,252.72 653.45,239.61 653.54,226.17 653.62,212.52 653.71,198.77 653.80,185.04 653.89,171.46 653.97,158.13 654.06,145.19 654.15,132.73 654.23,120.88 654.32,109.72 654.41,99.37 654.50,89.91 654.58,81.42 654.67,73.99 654.76,67.66 654.84,62.51 654.93,58.57 655.02,55.89 655.10,54.48 655.19,54.36 655.28,55.53 655.37,57.97 655.45,61.68 655.54,66.62 655.63,72.75 655.71,80.00 655.80,88.33 655.89,97.65 655.97,107.89 656.06,118.95 656.15,130.75 656.24,143.17 656.32,156.10 656.41,169.44 656.50,183.07 656.58,196.87 656.67,210.71 656.76,224.47 656.84,238.04 656.93,251.29 657.02,264.10 657.11,276.37 657.19,287.98 657.28,298.83 657.37,308.83 657.45,317.88 657.54,325.91 657.63,332.84 657.71,338.61 657.80,343.17 657.89,346.49 657.98,348.52 658.06,349.25 658.15,348.67 658.24,346.79 658.32,343.63 658.41,339.21 658.50,333.56 658.58,326.75 658.67,318.82 658.76,309.85 658.85,299.92 658.93,289.12 659.02,277.53 659.11,265.27 659.19,252.44 659.28,239.16 659.37,225.54 659.45,211.71 659.54,197.79 659.63,183.90 659.71,170.16 659.80,156.71 659.89,143.65 659.98,131.12 660.06,119.21 660.15,108.03 660.24,97.69 660.32,88.28 660.41,79.89 660.50,72.58 660.59,66.43 660.67,61.49 660.76,57.80 660.85,55.40 660.93,54.32 661.02,54.56 661.11,56.11 661.19,58.98 661.28,63.13 661.37,68.52 661.46,75.11 661.54,82.84 661.63,91.64 661.72,101.44 661.80,112.14 661.89,123.64 661.98,135.86 662.06,148.66 662.15,161.95 662.24,175.60 662.33,189.49 662.41,203.49 662.50,217.48 662.59,231.33 662.67,244.91 662.76,258.11 662.85,270.80 662.93,282.87 663.02,294.20 663.11,304.71 663.19,314.28 663.28,322.83 663.37,330.29 663.46,336.59 663.54,341.66 663.63,345.47 663.72,347.97 663.80,349.15 663.89,348.99 663.98,347.50 664.07,344.68 664.15,340.56 664.24,335.17 664.33,328.58 664.41,320.82 664.50,311.99 664.59,302.14 664.67,291.39 664.76,279.81 664.85,267.52 664.93,254.63 665.02,241.25 665.11,227.51 665.20,213.53 665.28,199.45 665.37,185.38 665.46,171.46 665.54,157.81 665.63,144.56 665.72,131.83 665.81,119.74 665.89,108.40 665.98,97.91 666.07,88.37 666.15,79.87 666.24,72.49 666.33,66.28 666.41,61.32 666.50,57.65 666.59,55.30 666.67,54.29 666.76,54.64 666.85,56.34 666.94,59.37 667.02,63.72 667.11,69.34 667.20,76.17 667.28,84.17 667.37,93.25 667.46,103.33 667.55,114.32 667.63,126.11 667.72,138.61 667.81,151.69 667.89,165.24 667.98,179.12 668.07,193.22 668.15,207.40 668.24,221.52 668.33,235.47 668.41,249.11 668.50,262.31 668.59,274.96 668.68,286.93 668.76,298.11 668.85,308.40 668.94,317.71 669.02,325.94 669.11,333.02 669.20,338.88 669.28,343.47 669.37,346.75 669.46,348.68 669.55,349.24 669.63,348.44 669.72,346.27 669.81,342.75 669.89,337.93 669.98,331.83 670.07,324.52 670.15,316.07 670.24,306.55 670.33,296.05 670.42,284.67 670.50,272.51 670.59,259.69 670.68,246.33 670.76,232.55 670.85,218.48 670.94,204.25 671.03,189.99 671.11,175.84 671.20,161.93 671.29,148.40 671.37,135.36 671.46,122.93 671.55,111.25 671.63,100.41 671.72,90.52 671.81,81.67 671.89,73.94 671.98,67.42 672.07,62.15 672.16,58.20 672.24,55.59 672.33,54.36 672.42,54.51 672.50,56.04 672.59,58.95 672.68,63.21 672.76,68.76 672.85,75.58 672.94,83.58 673.03,92.70 673.11,102.84 673.20,113.93 673.29,125.84 673.37,138.47 673.46,151.70 673.55,165.41 673.63,179.46 673.72,193.73 673.81,208.07 673.90,222.36 673.98,236.45 674.07,250.22 674.16,263.53 674.24,276.26 674.33,288.29 674.42,299.49 674.50,309.78 674.59,319.03 674.68,327.18 674.77,334.14 674.85,339.84 674.94,344.23 675.03,347.27 675.11,348.92 675.20,349.18 675.29,348.03 675.38,345.49 675.46,341.58 675.55,336.34 675.64,329.82 675.72,322.07 675.81,313.17 675.90,303.21 675.98,292.29 676.07,280.49 676.16,267.94 676.25,254.76 676.33,241.07 676.42,226.99 676.51,212.68 676.59,198.26 676.68,183.87 676.77,169.65 676.85,155.73 676.94,142.25 677.03,129.34 677.12,117.12 677.20,105.71 677.29,95.22 677.38,85.75 677.46,77.39 677.55,70.22 677.64,64.32 677.72,59.74 677.81,56.52 677.90,54.69 677.99,54.28 678.07,55.29 678.16,57.71 678.25,61.52 678.33,66.67 678.42,73.13 678.51,80.84 678.59,89.70 678.68,99.66 678.77,110.59 678.86,122.41 678.94,135.00 679.03,148.24 679.12,161.99 679.20,176.13 679.29,190.52 679.38,205.02 679.46,219.50 679.55,233.80 679.64,247.80 679.72,261.35 679.81,274.33 679.90,286.60 679.99,298.06 680.07,308.58 680.16,318.07 680.25,326.43 680.33,333.58 680.42,339.46 680.51,343.99 680.60,347.14 680.68,348.88 680.77,349.19 680.86,348.07 680.94,345.51 681.03,341.56 681.12,336.25 681.20,329.62 681.29,321.75 681.38,312.71 681.47,302.58 681.55,291.46 681.64,279.47 681.73,266.72 681.81,253.33 681.90,239.43 681.99,225.16 682.07,210.67 682.16,196.08 682.25,181.54 682.34,167.20 682.42,153.20 682.51,139.67 682.60,126.74 682.68,114.55 682.77,103.21 682.86,92.84 682.94,83.53 683.03,75.38 683.12,68.47 683.20,62.87 683.29,58.63 683.38,55.80 683.47,54.41 683.55,54.46 683.64,55.96 683.73,58.90 683.81,63.25 683.90,68.96 683.99,75.98 684.08,84.24 684.16,93.66 684.25,104.15 684.34,115.60 684.42,127.91 684.51,140.95 684.60,154.59 684.68,168.70 684.77,183.14 684.86,197.76 684.94,212.43 685.03,226.99 685.12,241.31 685.21,255.24 685.29,268.64 685.38,281.38 685.47,293.33 685.55,304.38 685.64,314.41 685.73,323.32 685.82,331.03 685.90,337.45 685.99,342.53 686.08,346.22 686.16,348.46 686.25,349.25 686.34,348.57 686.42,346.43 686.51,342.85 686.60,337.86 686.68,331.52 686.77,323.88 686.86,315.02 686.95,305.03 687.03,294.01 687.12,282.07 687.21,269.33 687.29,255.90 687.38,241.94 687.47,227.57 687.56,212.94 687.64,198.19 687.73,183.48 687.82,168.95 687.90,154.74 687.99,141.00 688.08,127.87 688.16,115.48 688.25,103.95 688.34,93.40 688.42,83.93 688.51,75.64 688.60,68.62 688.69,62.93 688.77,58.64 688.86,55.78 688.95,54.39 689.03,54.48 689.12,56.06 689.21,59.10 689.29,63.57 689.38,69.44 689.47,76.64 689.56,85.10 689.64,94.74 689.73,105.46 689.82,117.16 689.90,129.71 689.99,142.99 690.08,156.86 690.16,171.19 690.25,185.83 690.34,200.63 690.43,215.45 690.51,230.13 690.60,244.53 690.69,258.50 690.77,271.89 690.86,284.58 690.95,296.43 691.04,307.32 691.12,317.15 691.21,325.80 691.30,333.20 691.38,339.27 691.47,343.94 691.56,347.16 691.64,348.91 691.73,349.17 691.82,347.93 691.90,345.20 691.99,341.01 692.08,335.40 692.17,328.43 692.25,320.17 692.34,310.70 692.43,300.12 692.51,288.54 692.60,276.06 692.69,262.83 692.77,248.98 692.86,234.63 692.95,219.95 693.04,205.09 693.12,190.18 693.21,175.39 693.30,160.87 693.38,146.76 693.47,133.22 693.56,120.37 693.64,108.35 693.73,97.29 693.82,87.30 693.91,78.48 693.99,70.92 694.08,64.70 694.17,59.89 694.25,56.53 694.34,54.66 694.43,54.30 694.51,55.46 694.60,58.12 694.69,62.26 694.78,67.83 694.86,74.79 694.95,83.05 695.04,92.53 695.12,103.14 695.21,114.77 695.30,127.30 695.38,140.59 695.47,154.52 695.56,168.94 695.65,183.70 695.73,198.65 695.82,213.63 695.91,228.49 695.99,243.08 696.08,257.25 696.17,270.84 696.25,283.72 696.34,295.76 696.43,306.82 696.52,316.80 696.60,325.58 696.69,333.09 696.78,339.23 696.86,343.95 696.95,347.20 697.04,348.94 697.12,349.15 697.21,347.83 697.30,344.99 697.39,340.66 697.47,334.89 697.56,327.74 697.65,319.27 697.73,309.58 697.82,298.76 697.91,286.93 698.00,274.22 698.08,260.74 698.17,246.65 698.26,232.09 698.34,217.21 698.43,202.16 698.52,187.11 698.60,172.21 698.69,157.62 698.78,143.48 698.87,129.95 698.95,117.17 699.04,105.27 699.13,94.38 699.21,84.61 699.30,76.06 699.39,68.83 699.47,62.99 699.56,58.60 699.65,55.72 699.74,54.36 699.82,54.55 699.91,56.28 700.00,59.55 700.08,64.30 700.17,70.50 700.26,78.08 700.34,86.96 700.43,97.05 700.52,108.24 700.61,120.42 700.69,133.46 700.78,147.21 700.87,161.55 700.95,176.31 701.04,191.34 701.13,206.48 701.21,221.57 701.30,236.46 701.39,250.99 701.48,265.00 701.56,278.34 701.65,290.87 701.74,302.47 701.82,313.00 701.91,322.36 702.00,330.44 702.08,337.17 702.17,342.46 702.26,346.26 702.35,348.53 702.43,349.25 702.52,348.40 702.61,346.00 702.69,342.07 702.78,336.65 702.87,329.80 702.95,321.58 703.04,312.09 703.13,301.43 703.22,289.71 703.30,277.05 703.39,263.58 703.48,249.46 703.56,234.83 703.65,219.84 703.74,204.65 703.82,189.44 703.91,174.35 704.00,159.55 704.09,145.20 704.17,131.45 704.26,118.45 704.35,106.33 704.43,95.23 704.52,85.27 704.61,76.55 704.69,69.17 704.78,63.20 704.87,58.72 704.96,55.76 705.04,54.37 705.13,54.55 705.22,56.31 705.30,59.63 705.39,64.47 705.48,70.79 705.56,78.51 705.65,87.55 705.74,97.82 705.83,109.21 705.91,121.59 706.00,134.84 706.09,148.81 706.17,163.35 706.26,178.30 706.35,193.51 706.43,208.82 706.52,224.04 706.61,239.03 706.70,253.62 706.78,267.66 706.87,280.98 706.96,293.46 707.04,304.95 707.13,315.32 707.22,324.47 707.30,332.30 707.39,338.72 707.48,343.66 707.56,347.07 707.65,348.91 707.74,349.15 707.83,347.81 707.91,344.88 708.00,340.40" fill="none" stroke="#e8e800" stroke-width="1.35" stroke-linejoin="round"/>
<line x1="238.5" y1="19" x2="238.5" y2="24" class="t"/>
<line x1="238.5" y1="380" x2="238.5" y2="385" class="t"/>
<line x1="290.5" y1="19" x2="290.5" y2="24" class="t"/>
<line x1="290.5" y1="380" x2="290.5" y2="385" class="t"/>
<line x1="343.5" y1="19" x2="343.5" y2="24" class="t"/>
<line x1="343.5" y1="380" x2="343.5" y2="385" class="t"/>
<line x1="395.5" y1="19" x2="395.5" y2="24" class="t"/>
<line x1="395.5" y1="380" x2="395.5" y2="385" class="t"/>
<line x1="447.5" y1="19" x2="447.5" y2="24" class="t"/>
<line x1="447.5" y1="380" x2="447.5" y2="385" class="t"/>
<line x1="499.5" y1="19" x2="499.5" y2="24" class="t"/>
<line x1="499.5" y1="380" x2="499.5" y2="385" class="t"/>
<line x1="551.5" y1="19" x2="551.5" y2="24" class="t"/>
<line x1="551.5" y1="380" x2="551.5" y2="385" class="t"/>
<line x1="604.5" y1="19" x2="604.5" y2="24" class="t"/>
<line x1="604.5" y1="380" x2="604.5" y2="385" class="t"/>
<line x1="656.5" y1="19" x2="656.5" y2="24" class="t"/>
<line x1="656.5" y1="380" x2="656.5" y2="385" class="t"/>
<line x1="187" y1="54.5" x2="192" y2="54.5" class="t"/>
<line x1="703" y1="54.5" x2="708" y2="54.5" class="t"/>
<line x1="187" y1="128.5" x2="192" y2="128.5" class="t"/>
<line x1="703" y1="128.5" x2="708" y2="128.5" class="t"/>
<line x1="187" y1="202.5" x2="192" y2="202.5" class="t"/>
<line x1="703" y1="202.5" x2="708" y2="202.5" class="t"/>
<line x1="187" y1="275.5" x2="192" y2="275.5" class="t"/>
<line x1="703" y1="275.5" x2="708" y2="275.5" class="t"/>
<line x1="187" y1="349.5" x2="192" y2="349.5" class="t"/>
<line x1="703" y1="349.5" x2="708" y2="349.5" class="t"/>
</svg>
<div class="xl" style="left:165.5px">0</div>
<div class="xl" style="left:217.7px">0.2</div>
<div class="xl" style="left:269.9px">0.4</div>
<div class="xl" style="left:322.1px">0.6</div>
<div class="xl" style="left:374.3px">0.8</div>
<div class="xl" style="left:427.3px">1</div>
<div class="xl" style="left:479.5px">1.2</div>
<div class="xl" style="left:531.7px">1.4</div>
<div class="xl" style="left:583.9px">1.6</div>
<div class="xl" style="left:636.1px">1.8</div>
<div class="xl" style="left:688.5px">2</div>
<div class="yl" style="top:50px">1</div>
<div class="yl" style="top:123px">0.5</div>
<div class="yl" style="top:197px">0</div>
<div class="yl" style="top:271px">-0.5</div>
<div class="yl" style="top:344px">-1</div>

<!-- status bar -->
<div class="a" style="left:163px;top:405px;width:560px;height:24px;background:#f0f0f0"></div>
<div class="a" style="left:163px;top:405px;width:560px;height:1px;background:#fff"></div>
<div class="a" style="left:163px;top:405px;width:1px;height:24px;background:#fff"></div>
<div class="a" style="left:163px;top:428px;width:560px;height:1px;background:#fff"></div>
<div class="a" style="left:722px;top:405px;width:1px;height:24px;background:#fff"></div>
<div class="st" style="left:164px;top:412px;letter-spacing:-0.35px">Ready</div>
<div class="a" style="left:624px;top:409px;width:46px;height:17px;border-top:1px solid #a0a0a0;border-left:1px solid #a0a0a0;border-right:1px solid #fff;border-bottom:1px solid #fff;"></div>
<div class="st" style="left:627px;top:412px;">Offset=0</div>
<div class="a" style="left:675px;top:409px;width:44px;height:17px;border-top:1px solid #a0a0a0;border-left:1px solid #a0a0a0;border-right:1px solid #fff;border-bottom:1px solid #fff;"></div>
<div class="st" style="left:678px;top:412px;letter-spacing:-0.3px">T=2.000</div>
</body></html>
